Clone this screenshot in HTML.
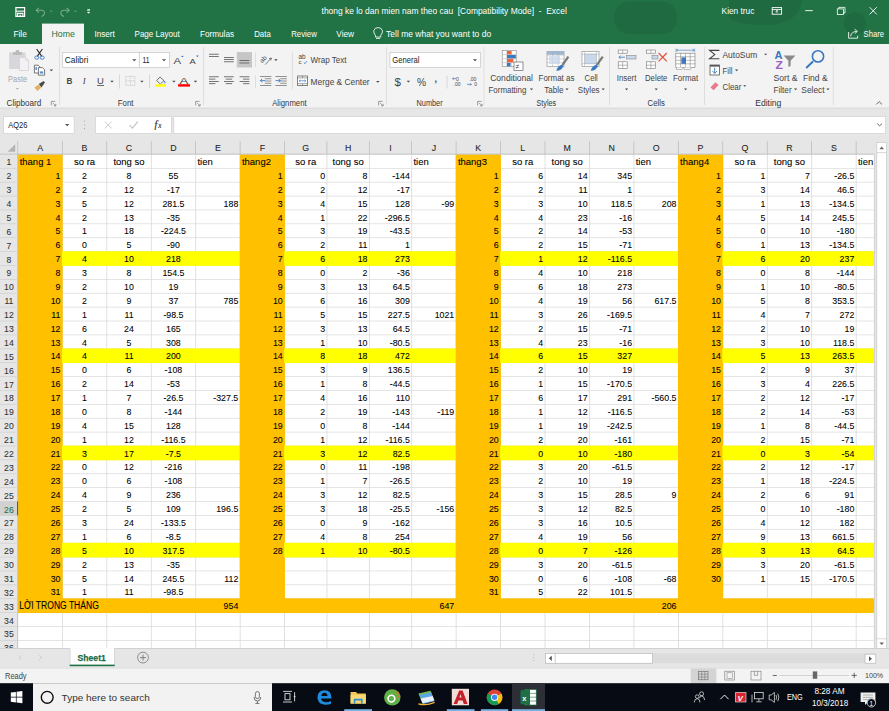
<!DOCTYPE html>
<html><head><meta charset="utf-8"><style>
html,body{margin:0;padding:0;width:889px;height:711px;overflow:hidden;background:#e6e6e6}
svg{display:block}
</style></head><body>
<svg width="889" height="711" viewBox="0 0 889 711">
<rect x="0" y="0" width="889" height="711" fill="#e6e6e6"/>
<!-- clip grid -->
<defs><clipPath id="gc"><rect x="0" y="0" width="874.2" height="648.4"/></clipPath></defs>
<g clip-path="url(#gc)"><rect x="17.86" y="154.4" width="856.34" height="494.0" fill="#fff"/><rect x="61.96" y="154.4" width="0.8" height="494.0" fill="#d9d9d9"/><rect x="106.40" y="154.4" width="0.8" height="494.0" fill="#d9d9d9"/><rect x="150.85" y="154.4" width="0.8" height="494.0" fill="#d9d9d9"/><rect x="195.30" y="154.4" width="0.8" height="494.0" fill="#d9d9d9"/><rect x="239.75" y="154.4" width="0.8" height="494.0" fill="#d9d9d9"/><rect x="284.19" y="154.4" width="0.8" height="494.0" fill="#d9d9d9"/><rect x="326.56" y="154.4" width="0.8" height="494.0" fill="#d9d9d9"/><rect x="368.92" y="154.4" width="0.8" height="494.0" fill="#d9d9d9"/><rect x="411.29" y="154.4" width="0.8" height="494.0" fill="#d9d9d9"/><rect x="455.73" y="154.4" width="0.8" height="494.0" fill="#d9d9d9"/><rect x="500.18" y="154.4" width="0.8" height="494.0" fill="#d9d9d9"/><rect x="544.63" y="154.4" width="0.8" height="494.0" fill="#d9d9d9"/><rect x="589.08" y="154.4" width="0.8" height="494.0" fill="#d9d9d9"/><rect x="633.52" y="154.4" width="0.8" height="494.0" fill="#d9d9d9"/><rect x="677.97" y="154.4" width="0.8" height="494.0" fill="#d9d9d9"/><rect x="722.42" y="154.4" width="0.8" height="494.0" fill="#d9d9d9"/><rect x="766.86" y="154.4" width="0.8" height="494.0" fill="#d9d9d9"/><rect x="811.31" y="154.4" width="0.8" height="494.0" fill="#d9d9d9"/><rect x="855.76" y="154.4" width="0.8" height="494.0" fill="#d9d9d9"/><rect x="17.86" y="167.94" width="856.34" height="0.7" fill="#d9d9d9"/><rect x="17.86" y="181.82" width="856.34" height="0.7" fill="#d9d9d9"/><rect x="17.86" y="195.71" width="856.34" height="0.7" fill="#d9d9d9"/><rect x="17.86" y="209.59" width="856.34" height="0.7" fill="#d9d9d9"/><rect x="17.86" y="223.47" width="856.34" height="0.7" fill="#d9d9d9"/><rect x="17.86" y="237.36" width="856.34" height="0.7" fill="#d9d9d9"/><rect x="17.86" y="251.25" width="856.34" height="0.7" fill="#d9d9d9"/><rect x="17.86" y="265.13" width="856.34" height="0.7" fill="#d9d9d9"/><rect x="17.86" y="279.01" width="856.34" height="0.7" fill="#d9d9d9"/><rect x="17.86" y="292.90" width="856.34" height="0.7" fill="#d9d9d9"/><rect x="17.86" y="306.78" width="856.34" height="0.7" fill="#d9d9d9"/><rect x="17.86" y="320.67" width="856.34" height="0.7" fill="#d9d9d9"/><rect x="17.86" y="334.55" width="856.34" height="0.7" fill="#d9d9d9"/><rect x="17.86" y="348.44" width="856.34" height="0.7" fill="#d9d9d9"/><rect x="17.86" y="362.32" width="856.34" height="0.7" fill="#d9d9d9"/><rect x="17.86" y="376.21" width="856.34" height="0.7" fill="#d9d9d9"/><rect x="17.86" y="390.09" width="856.34" height="0.7" fill="#d9d9d9"/><rect x="17.86" y="403.98" width="856.34" height="0.7" fill="#d9d9d9"/><rect x="17.86" y="417.87" width="856.34" height="0.7" fill="#d9d9d9"/><rect x="17.86" y="431.75" width="856.34" height="0.7" fill="#d9d9d9"/><rect x="17.86" y="445.63" width="856.34" height="0.7" fill="#d9d9d9"/><rect x="17.86" y="459.52" width="856.34" height="0.7" fill="#d9d9d9"/><rect x="17.86" y="473.40" width="856.34" height="0.7" fill="#d9d9d9"/><rect x="17.86" y="487.29" width="856.34" height="0.7" fill="#d9d9d9"/><rect x="17.86" y="501.17" width="856.34" height="0.7" fill="#d9d9d9"/><rect x="17.86" y="515.06" width="856.34" height="0.7" fill="#d9d9d9"/><rect x="17.86" y="528.94" width="856.34" height="0.7" fill="#d9d9d9"/><rect x="17.86" y="542.83" width="856.34" height="0.7" fill="#d9d9d9"/><rect x="17.86" y="556.72" width="856.34" height="0.7" fill="#d9d9d9"/><rect x="17.86" y="570.60" width="856.34" height="0.7" fill="#d9d9d9"/><rect x="17.86" y="584.49" width="856.34" height="0.7" fill="#d9d9d9"/><rect x="17.86" y="598.37" width="856.34" height="0.7" fill="#d9d9d9"/><rect x="17.86" y="612.25" width="856.34" height="0.7" fill="#d9d9d9"/><rect x="17.86" y="626.14" width="856.34" height="0.7" fill="#d9d9d9"/><rect x="17.86" y="640.02" width="856.34" height="0.7" fill="#d9d9d9"/><rect x="17.46" y="154.00" width="45.25" height="445.12" fill="#ffc000"/><rect x="61.91" y="251.19" width="178.59" height="14.69" fill="#ffff00"/><rect x="61.91" y="348.39" width="178.59" height="14.69" fill="#ffff00"/><rect x="61.91" y="445.59" width="178.59" height="14.69" fill="#ffff00"/><rect x="61.91" y="542.78" width="178.59" height="14.69" fill="#ffff00"/><rect x="239.70" y="154.00" width="45.25" height="445.12" fill="#ffc000"/><rect x="284.14" y="251.19" width="172.34" height="14.69" fill="#ffff00"/><rect x="284.14" y="348.39" width="172.34" height="14.69" fill="#ffff00"/><rect x="284.14" y="445.59" width="172.34" height="14.69" fill="#ffff00"/><rect x="284.14" y="542.78" width="172.34" height="14.69" fill="#ffff00"/><rect x="455.68" y="154.00" width="45.25" height="445.12" fill="#ffc000"/><rect x="500.13" y="251.19" width="178.59" height="14.69" fill="#ffff00"/><rect x="500.13" y="348.39" width="178.59" height="14.69" fill="#ffff00"/><rect x="500.13" y="445.59" width="178.59" height="14.69" fill="#ffff00"/><rect x="500.13" y="542.78" width="178.59" height="14.69" fill="#ffff00"/><rect x="677.92" y="154.00" width="45.25" height="445.12" fill="#ffc000"/><rect x="722.37" y="251.19" width="151.83" height="14.69" fill="#ffff00"/><rect x="722.37" y="348.39" width="151.83" height="14.69" fill="#ffff00"/><rect x="722.37" y="445.59" width="151.83" height="14.69" fill="#ffff00"/><rect x="722.37" y="542.78" width="151.83" height="14.69" fill="#ffff00"/><rect x="17.46" y="598.32" width="856.74" height="14.69" fill="#ffc000"/><g font-family="Liberation Sans" font-size="9.2" fill="#000" stroke="#000" stroke-width="0.08"><text x="19.66" y="165.00" text-anchor="start" font-size="9.5">thang 1</text><text x="84.53" y="165.00" text-anchor="middle" font-size="9.5">so ra</text><text x="128.98" y="165.00" text-anchor="middle" font-size="9.5">tong so</text><text x="197.45" y="165.00" text-anchor="start" font-size="9.5">tien</text><text x="60.51" y="178.88" text-anchor="end" font-size="9.75" textLength="4.91" lengthAdjust="spacingAndGlyphs">1</text><text x="84.53" y="178.88" text-anchor="middle" font-size="9.75" textLength="4.91" lengthAdjust="spacingAndGlyphs">2</text><text x="128.98" y="178.88" text-anchor="middle" font-size="9.75" textLength="4.91" lengthAdjust="spacingAndGlyphs">8</text><text x="173.43" y="178.88" text-anchor="middle" font-size="9.75" textLength="9.81" lengthAdjust="spacingAndGlyphs">55</text><text x="60.51" y="192.77" text-anchor="end" font-size="9.75" textLength="4.91" lengthAdjust="spacingAndGlyphs">2</text><text x="84.53" y="192.77" text-anchor="middle" font-size="9.75" textLength="4.91" lengthAdjust="spacingAndGlyphs">2</text><text x="128.98" y="192.77" text-anchor="middle" font-size="9.75" textLength="9.81" lengthAdjust="spacingAndGlyphs">12</text><text x="173.43" y="192.77" text-anchor="middle" font-size="9.75" textLength="12.75" lengthAdjust="spacingAndGlyphs">-17</text><text x="60.51" y="206.66" text-anchor="end" font-size="9.75" textLength="4.91" lengthAdjust="spacingAndGlyphs">3</text><text x="84.53" y="206.66" text-anchor="middle" font-size="9.75" textLength="4.91" lengthAdjust="spacingAndGlyphs">5</text><text x="128.98" y="206.66" text-anchor="middle" font-size="9.75" textLength="9.81" lengthAdjust="spacingAndGlyphs">12</text><text x="173.43" y="206.66" text-anchor="middle" font-size="9.75" textLength="22.08" lengthAdjust="spacingAndGlyphs">281.5</text><text x="238.30" y="206.66" text-anchor="end" font-size="9.75" textLength="14.72" lengthAdjust="spacingAndGlyphs">188</text><text x="60.51" y="220.54" text-anchor="end" font-size="9.75" textLength="4.91" lengthAdjust="spacingAndGlyphs">4</text><text x="84.53" y="220.54" text-anchor="middle" font-size="9.75" textLength="4.91" lengthAdjust="spacingAndGlyphs">2</text><text x="128.98" y="220.54" text-anchor="middle" font-size="9.75" textLength="9.81" lengthAdjust="spacingAndGlyphs">13</text><text x="173.43" y="220.54" text-anchor="middle" font-size="9.75" textLength="12.75" lengthAdjust="spacingAndGlyphs">-35</text><text x="60.51" y="234.42" text-anchor="end" font-size="9.75" textLength="4.91" lengthAdjust="spacingAndGlyphs">5</text><text x="84.53" y="234.42" text-anchor="middle" font-size="9.75" textLength="4.91" lengthAdjust="spacingAndGlyphs">1</text><text x="128.98" y="234.42" text-anchor="middle" font-size="9.75" textLength="9.81" lengthAdjust="spacingAndGlyphs">18</text><text x="173.43" y="234.42" text-anchor="middle" font-size="9.75" textLength="25.02" lengthAdjust="spacingAndGlyphs">-224.5</text><text x="60.51" y="248.31" text-anchor="end" font-size="9.75" textLength="4.91" lengthAdjust="spacingAndGlyphs">6</text><text x="84.53" y="248.31" text-anchor="middle" font-size="9.75" textLength="4.91" lengthAdjust="spacingAndGlyphs">0</text><text x="128.98" y="248.31" text-anchor="middle" font-size="9.75" textLength="4.91" lengthAdjust="spacingAndGlyphs">5</text><text x="173.43" y="248.31" text-anchor="middle" font-size="9.75" textLength="12.75" lengthAdjust="spacingAndGlyphs">-90</text><text x="60.51" y="262.19" text-anchor="end" font-size="9.75" textLength="4.91" lengthAdjust="spacingAndGlyphs">7</text><text x="84.53" y="262.19" text-anchor="middle" font-size="9.75" textLength="4.91" lengthAdjust="spacingAndGlyphs">4</text><text x="128.98" y="262.19" text-anchor="middle" font-size="9.75" textLength="9.81" lengthAdjust="spacingAndGlyphs">10</text><text x="173.43" y="262.19" text-anchor="middle" font-size="9.75" textLength="14.72" lengthAdjust="spacingAndGlyphs">218</text><text x="60.51" y="276.08" text-anchor="end" font-size="9.75" textLength="4.91" lengthAdjust="spacingAndGlyphs">8</text><text x="84.53" y="276.08" text-anchor="middle" font-size="9.75" textLength="4.91" lengthAdjust="spacingAndGlyphs">3</text><text x="128.98" y="276.08" text-anchor="middle" font-size="9.75" textLength="4.91" lengthAdjust="spacingAndGlyphs">8</text><text x="173.43" y="276.08" text-anchor="middle" font-size="9.75" textLength="22.08" lengthAdjust="spacingAndGlyphs">154.5</text><text x="60.51" y="289.97" text-anchor="end" font-size="9.75" textLength="4.91" lengthAdjust="spacingAndGlyphs">9</text><text x="84.53" y="289.97" text-anchor="middle" font-size="9.75" textLength="4.91" lengthAdjust="spacingAndGlyphs">2</text><text x="128.98" y="289.97" text-anchor="middle" font-size="9.75" textLength="9.81" lengthAdjust="spacingAndGlyphs">10</text><text x="173.43" y="289.97" text-anchor="middle" font-size="9.75" textLength="9.81" lengthAdjust="spacingAndGlyphs">19</text><text x="60.51" y="303.85" text-anchor="end" font-size="9.75" textLength="9.81" lengthAdjust="spacingAndGlyphs">10</text><text x="84.53" y="303.85" text-anchor="middle" font-size="9.75" textLength="4.91" lengthAdjust="spacingAndGlyphs">2</text><text x="128.98" y="303.85" text-anchor="middle" font-size="9.75" textLength="4.91" lengthAdjust="spacingAndGlyphs">9</text><text x="173.43" y="303.85" text-anchor="middle" font-size="9.75" textLength="9.81" lengthAdjust="spacingAndGlyphs">37</text><text x="238.30" y="303.85" text-anchor="end" font-size="9.75" textLength="14.72" lengthAdjust="spacingAndGlyphs">785</text><text x="60.51" y="317.74" text-anchor="end" font-size="9.75" textLength="9.16" lengthAdjust="spacingAndGlyphs">11</text><text x="84.53" y="317.74" text-anchor="middle" font-size="9.75" textLength="4.91" lengthAdjust="spacingAndGlyphs">1</text><text x="128.98" y="317.74" text-anchor="middle" font-size="9.75" textLength="9.16" lengthAdjust="spacingAndGlyphs">11</text><text x="173.43" y="317.74" text-anchor="middle" font-size="9.75" textLength="20.11" lengthAdjust="spacingAndGlyphs">-98.5</text><text x="60.51" y="331.62" text-anchor="end" font-size="9.75" textLength="9.81" lengthAdjust="spacingAndGlyphs">12</text><text x="84.53" y="331.62" text-anchor="middle" font-size="9.75" textLength="4.91" lengthAdjust="spacingAndGlyphs">6</text><text x="128.98" y="331.62" text-anchor="middle" font-size="9.75" textLength="9.81" lengthAdjust="spacingAndGlyphs">24</text><text x="173.43" y="331.62" text-anchor="middle" font-size="9.75" textLength="14.72" lengthAdjust="spacingAndGlyphs">165</text><text x="60.51" y="345.50" text-anchor="end" font-size="9.75" textLength="9.81" lengthAdjust="spacingAndGlyphs">13</text><text x="84.53" y="345.50" text-anchor="middle" font-size="9.75" textLength="4.91" lengthAdjust="spacingAndGlyphs">4</text><text x="128.98" y="345.50" text-anchor="middle" font-size="9.75" textLength="4.91" lengthAdjust="spacingAndGlyphs">5</text><text x="173.43" y="345.50" text-anchor="middle" font-size="9.75" textLength="14.72" lengthAdjust="spacingAndGlyphs">308</text><text x="60.51" y="359.39" text-anchor="end" font-size="9.75" textLength="9.81" lengthAdjust="spacingAndGlyphs">14</text><text x="84.53" y="359.39" text-anchor="middle" font-size="9.75" textLength="4.91" lengthAdjust="spacingAndGlyphs">4</text><text x="128.98" y="359.39" text-anchor="middle" font-size="9.75" textLength="9.16" lengthAdjust="spacingAndGlyphs">11</text><text x="173.43" y="359.39" text-anchor="middle" font-size="9.75" textLength="14.72" lengthAdjust="spacingAndGlyphs">200</text><text x="60.51" y="373.28" text-anchor="end" font-size="9.75" textLength="9.81" lengthAdjust="spacingAndGlyphs">15</text><text x="84.53" y="373.28" text-anchor="middle" font-size="9.75" textLength="4.91" lengthAdjust="spacingAndGlyphs">0</text><text x="128.98" y="373.28" text-anchor="middle" font-size="9.75" textLength="4.91" lengthAdjust="spacingAndGlyphs">6</text><text x="173.43" y="373.28" text-anchor="middle" font-size="9.75" textLength="17.66" lengthAdjust="spacingAndGlyphs">-108</text><text x="60.51" y="387.16" text-anchor="end" font-size="9.75" textLength="9.81" lengthAdjust="spacingAndGlyphs">16</text><text x="84.53" y="387.16" text-anchor="middle" font-size="9.75" textLength="4.91" lengthAdjust="spacingAndGlyphs">2</text><text x="128.98" y="387.16" text-anchor="middle" font-size="9.75" textLength="9.81" lengthAdjust="spacingAndGlyphs">14</text><text x="173.43" y="387.16" text-anchor="middle" font-size="9.75" textLength="12.75" lengthAdjust="spacingAndGlyphs">-53</text><text x="60.51" y="401.05" text-anchor="end" font-size="9.75" textLength="9.81" lengthAdjust="spacingAndGlyphs">17</text><text x="84.53" y="401.05" text-anchor="middle" font-size="9.75" textLength="4.91" lengthAdjust="spacingAndGlyphs">1</text><text x="128.98" y="401.05" text-anchor="middle" font-size="9.75" textLength="4.91" lengthAdjust="spacingAndGlyphs">7</text><text x="173.43" y="401.05" text-anchor="middle" font-size="9.75" textLength="20.11" lengthAdjust="spacingAndGlyphs">-26.5</text><text x="238.30" y="401.05" text-anchor="end" font-size="9.75" textLength="25.02" lengthAdjust="spacingAndGlyphs">-327.5</text><text x="60.51" y="414.93" text-anchor="end" font-size="9.75" textLength="9.81" lengthAdjust="spacingAndGlyphs">18</text><text x="84.53" y="414.93" text-anchor="middle" font-size="9.75" textLength="4.91" lengthAdjust="spacingAndGlyphs">0</text><text x="128.98" y="414.93" text-anchor="middle" font-size="9.75" textLength="4.91" lengthAdjust="spacingAndGlyphs">8</text><text x="173.43" y="414.93" text-anchor="middle" font-size="9.75" textLength="17.66" lengthAdjust="spacingAndGlyphs">-144</text><text x="60.51" y="428.82" text-anchor="end" font-size="9.75" textLength="9.81" lengthAdjust="spacingAndGlyphs">19</text><text x="84.53" y="428.82" text-anchor="middle" font-size="9.75" textLength="4.91" lengthAdjust="spacingAndGlyphs">4</text><text x="128.98" y="428.82" text-anchor="middle" font-size="9.75" textLength="9.81" lengthAdjust="spacingAndGlyphs">15</text><text x="173.43" y="428.82" text-anchor="middle" font-size="9.75" textLength="14.72" lengthAdjust="spacingAndGlyphs">128</text><text x="60.51" y="442.70" text-anchor="end" font-size="9.75" textLength="9.81" lengthAdjust="spacingAndGlyphs">20</text><text x="84.53" y="442.70" text-anchor="middle" font-size="9.75" textLength="4.91" lengthAdjust="spacingAndGlyphs">1</text><text x="128.98" y="442.70" text-anchor="middle" font-size="9.75" textLength="9.81" lengthAdjust="spacingAndGlyphs">12</text><text x="173.43" y="442.70" text-anchor="middle" font-size="9.75" textLength="24.36" lengthAdjust="spacingAndGlyphs">-116.5</text><text x="60.51" y="456.59" text-anchor="end" font-size="9.75" textLength="9.81" lengthAdjust="spacingAndGlyphs">21</text><text x="84.53" y="456.59" text-anchor="middle" font-size="9.75" textLength="4.91" lengthAdjust="spacingAndGlyphs">3</text><text x="128.98" y="456.59" text-anchor="middle" font-size="9.75" textLength="9.81" lengthAdjust="spacingAndGlyphs">17</text><text x="173.43" y="456.59" text-anchor="middle" font-size="9.75" textLength="15.20" lengthAdjust="spacingAndGlyphs">-7.5</text><text x="60.51" y="470.47" text-anchor="end" font-size="9.75" textLength="9.81" lengthAdjust="spacingAndGlyphs">22</text><text x="84.53" y="470.47" text-anchor="middle" font-size="9.75" textLength="4.91" lengthAdjust="spacingAndGlyphs">0</text><text x="128.98" y="470.47" text-anchor="middle" font-size="9.75" textLength="9.81" lengthAdjust="spacingAndGlyphs">12</text><text x="173.43" y="470.47" text-anchor="middle" font-size="9.75" textLength="17.66" lengthAdjust="spacingAndGlyphs">-216</text><text x="60.51" y="484.36" text-anchor="end" font-size="9.75" textLength="9.81" lengthAdjust="spacingAndGlyphs">23</text><text x="84.53" y="484.36" text-anchor="middle" font-size="9.75" textLength="4.91" lengthAdjust="spacingAndGlyphs">0</text><text x="128.98" y="484.36" text-anchor="middle" font-size="9.75" textLength="4.91" lengthAdjust="spacingAndGlyphs">6</text><text x="173.43" y="484.36" text-anchor="middle" font-size="9.75" textLength="17.66" lengthAdjust="spacingAndGlyphs">-108</text><text x="60.51" y="498.24" text-anchor="end" font-size="9.75" textLength="9.81" lengthAdjust="spacingAndGlyphs">24</text><text x="84.53" y="498.24" text-anchor="middle" font-size="9.75" textLength="4.91" lengthAdjust="spacingAndGlyphs">4</text><text x="128.98" y="498.24" text-anchor="middle" font-size="9.75" textLength="4.91" lengthAdjust="spacingAndGlyphs">9</text><text x="173.43" y="498.24" text-anchor="middle" font-size="9.75" textLength="14.72" lengthAdjust="spacingAndGlyphs">236</text><text x="60.51" y="512.12" text-anchor="end" font-size="9.75" textLength="9.81" lengthAdjust="spacingAndGlyphs">25</text><text x="84.53" y="512.12" text-anchor="middle" font-size="9.75" textLength="4.91" lengthAdjust="spacingAndGlyphs">2</text><text x="128.98" y="512.12" text-anchor="middle" font-size="9.75" textLength="4.91" lengthAdjust="spacingAndGlyphs">5</text><text x="173.43" y="512.12" text-anchor="middle" font-size="9.75" textLength="14.72" lengthAdjust="spacingAndGlyphs">109</text><text x="238.30" y="512.12" text-anchor="end" font-size="9.75" textLength="22.08" lengthAdjust="spacingAndGlyphs">196.5</text><text x="60.51" y="526.01" text-anchor="end" font-size="9.75" textLength="9.81" lengthAdjust="spacingAndGlyphs">26</text><text x="84.53" y="526.01" text-anchor="middle" font-size="9.75" textLength="4.91" lengthAdjust="spacingAndGlyphs">3</text><text x="128.98" y="526.01" text-anchor="middle" font-size="9.75" textLength="9.81" lengthAdjust="spacingAndGlyphs">24</text><text x="173.43" y="526.01" text-anchor="middle" font-size="9.75" textLength="25.02" lengthAdjust="spacingAndGlyphs">-133.5</text><text x="60.51" y="539.89" text-anchor="end" font-size="9.75" textLength="9.81" lengthAdjust="spacingAndGlyphs">27</text><text x="84.53" y="539.89" text-anchor="middle" font-size="9.75" textLength="4.91" lengthAdjust="spacingAndGlyphs">1</text><text x="128.98" y="539.89" text-anchor="middle" font-size="9.75" textLength="4.91" lengthAdjust="spacingAndGlyphs">6</text><text x="173.43" y="539.89" text-anchor="middle" font-size="9.75" textLength="15.20" lengthAdjust="spacingAndGlyphs">-8.5</text><text x="60.51" y="553.78" text-anchor="end" font-size="9.75" textLength="9.81" lengthAdjust="spacingAndGlyphs">28</text><text x="84.53" y="553.78" text-anchor="middle" font-size="9.75" textLength="4.91" lengthAdjust="spacingAndGlyphs">5</text><text x="128.98" y="553.78" text-anchor="middle" font-size="9.75" textLength="9.81" lengthAdjust="spacingAndGlyphs">10</text><text x="173.43" y="553.78" text-anchor="middle" font-size="9.75" textLength="22.08" lengthAdjust="spacingAndGlyphs">317.5</text><text x="60.51" y="567.67" text-anchor="end" font-size="9.75" textLength="9.81" lengthAdjust="spacingAndGlyphs">29</text><text x="84.53" y="567.67" text-anchor="middle" font-size="9.75" textLength="4.91" lengthAdjust="spacingAndGlyphs">2</text><text x="128.98" y="567.67" text-anchor="middle" font-size="9.75" textLength="9.81" lengthAdjust="spacingAndGlyphs">13</text><text x="173.43" y="567.67" text-anchor="middle" font-size="9.75" textLength="12.75" lengthAdjust="spacingAndGlyphs">-35</text><text x="60.51" y="581.55" text-anchor="end" font-size="9.75" textLength="9.81" lengthAdjust="spacingAndGlyphs">30</text><text x="84.53" y="581.55" text-anchor="middle" font-size="9.75" textLength="4.91" lengthAdjust="spacingAndGlyphs">5</text><text x="128.98" y="581.55" text-anchor="middle" font-size="9.75" textLength="9.81" lengthAdjust="spacingAndGlyphs">14</text><text x="173.43" y="581.55" text-anchor="middle" font-size="9.75" textLength="22.08" lengthAdjust="spacingAndGlyphs">245.5</text><text x="238.30" y="581.55" text-anchor="end" font-size="9.75" textLength="14.07" lengthAdjust="spacingAndGlyphs">112</text><text x="60.51" y="595.44" text-anchor="end" font-size="9.75" textLength="9.81" lengthAdjust="spacingAndGlyphs">31</text><text x="84.53" y="595.44" text-anchor="middle" font-size="9.75" textLength="4.91" lengthAdjust="spacingAndGlyphs">1</text><text x="128.98" y="595.44" text-anchor="middle" font-size="9.75" textLength="9.16" lengthAdjust="spacingAndGlyphs">11</text><text x="173.43" y="595.44" text-anchor="middle" font-size="9.75" textLength="20.11" lengthAdjust="spacingAndGlyphs">-98.5</text><text x="241.90" y="165.00" text-anchor="start" font-size="9.5">thang2</text><text x="305.73" y="165.00" text-anchor="middle" font-size="9.5">so ra</text><text x="348.09" y="165.00" text-anchor="middle" font-size="9.5">tong so</text><text x="413.44" y="165.00" text-anchor="start" font-size="9.5">tien</text><text x="282.74" y="178.88" text-anchor="end" font-size="9.75" textLength="4.91" lengthAdjust="spacingAndGlyphs">1</text><text x="325.11" y="178.88" text-anchor="end" font-size="9.75" textLength="4.91" lengthAdjust="spacingAndGlyphs">0</text><text x="367.47" y="178.88" text-anchor="end" font-size="9.75" textLength="4.91" lengthAdjust="spacingAndGlyphs">8</text><text x="409.84" y="178.88" text-anchor="end" font-size="9.75" textLength="17.66" lengthAdjust="spacingAndGlyphs">-144</text><text x="282.74" y="192.77" text-anchor="end" font-size="9.75" textLength="4.91" lengthAdjust="spacingAndGlyphs">2</text><text x="325.11" y="192.77" text-anchor="end" font-size="9.75" textLength="4.91" lengthAdjust="spacingAndGlyphs">2</text><text x="367.47" y="192.77" text-anchor="end" font-size="9.75" textLength="9.81" lengthAdjust="spacingAndGlyphs">12</text><text x="409.84" y="192.77" text-anchor="end" font-size="9.75" textLength="12.75" lengthAdjust="spacingAndGlyphs">-17</text><text x="282.74" y="206.66" text-anchor="end" font-size="9.75" textLength="4.91" lengthAdjust="spacingAndGlyphs">3</text><text x="325.11" y="206.66" text-anchor="end" font-size="9.75" textLength="4.91" lengthAdjust="spacingAndGlyphs">4</text><text x="367.47" y="206.66" text-anchor="end" font-size="9.75" textLength="9.81" lengthAdjust="spacingAndGlyphs">15</text><text x="409.84" y="206.66" text-anchor="end" font-size="9.75" textLength="14.72" lengthAdjust="spacingAndGlyphs">128</text><text x="454.28" y="206.66" text-anchor="end" font-size="9.75" textLength="12.75" lengthAdjust="spacingAndGlyphs">-99</text><text x="282.74" y="220.54" text-anchor="end" font-size="9.75" textLength="4.91" lengthAdjust="spacingAndGlyphs">4</text><text x="325.11" y="220.54" text-anchor="end" font-size="9.75" textLength="4.91" lengthAdjust="spacingAndGlyphs">1</text><text x="367.47" y="220.54" text-anchor="end" font-size="9.75" textLength="9.81" lengthAdjust="spacingAndGlyphs">22</text><text x="409.84" y="220.54" text-anchor="end" font-size="9.75" textLength="25.02" lengthAdjust="spacingAndGlyphs">-296.5</text><text x="282.74" y="234.42" text-anchor="end" font-size="9.75" textLength="4.91" lengthAdjust="spacingAndGlyphs">5</text><text x="325.11" y="234.42" text-anchor="end" font-size="9.75" textLength="4.91" lengthAdjust="spacingAndGlyphs">3</text><text x="367.47" y="234.42" text-anchor="end" font-size="9.75" textLength="9.81" lengthAdjust="spacingAndGlyphs">19</text><text x="409.84" y="234.42" text-anchor="end" font-size="9.75" textLength="20.11" lengthAdjust="spacingAndGlyphs">-43.5</text><text x="282.74" y="248.31" text-anchor="end" font-size="9.75" textLength="4.91" lengthAdjust="spacingAndGlyphs">6</text><text x="325.11" y="248.31" text-anchor="end" font-size="9.75" textLength="4.91" lengthAdjust="spacingAndGlyphs">2</text><text x="367.47" y="248.31" text-anchor="end" font-size="9.75" textLength="9.16" lengthAdjust="spacingAndGlyphs">11</text><text x="409.84" y="248.31" text-anchor="end" font-size="9.75" textLength="4.91" lengthAdjust="spacingAndGlyphs">1</text><text x="282.74" y="262.19" text-anchor="end" font-size="9.75" textLength="4.91" lengthAdjust="spacingAndGlyphs">7</text><text x="325.11" y="262.19" text-anchor="end" font-size="9.75" textLength="4.91" lengthAdjust="spacingAndGlyphs">6</text><text x="367.47" y="262.19" text-anchor="end" font-size="9.75" textLength="9.81" lengthAdjust="spacingAndGlyphs">18</text><text x="409.84" y="262.19" text-anchor="end" font-size="9.75" textLength="14.72" lengthAdjust="spacingAndGlyphs">273</text><text x="282.74" y="276.08" text-anchor="end" font-size="9.75" textLength="4.91" lengthAdjust="spacingAndGlyphs">8</text><text x="325.11" y="276.08" text-anchor="end" font-size="9.75" textLength="4.91" lengthAdjust="spacingAndGlyphs">0</text><text x="367.47" y="276.08" text-anchor="end" font-size="9.75" textLength="4.91" lengthAdjust="spacingAndGlyphs">2</text><text x="409.84" y="276.08" text-anchor="end" font-size="9.75" textLength="12.75" lengthAdjust="spacingAndGlyphs">-36</text><text x="282.74" y="289.97" text-anchor="end" font-size="9.75" textLength="4.91" lengthAdjust="spacingAndGlyphs">9</text><text x="325.11" y="289.97" text-anchor="end" font-size="9.75" textLength="4.91" lengthAdjust="spacingAndGlyphs">3</text><text x="367.47" y="289.97" text-anchor="end" font-size="9.75" textLength="9.81" lengthAdjust="spacingAndGlyphs">13</text><text x="409.84" y="289.97" text-anchor="end" font-size="9.75" textLength="17.17" lengthAdjust="spacingAndGlyphs">64.5</text><text x="282.74" y="303.85" text-anchor="end" font-size="9.75" textLength="9.81" lengthAdjust="spacingAndGlyphs">10</text><text x="325.11" y="303.85" text-anchor="end" font-size="9.75" textLength="4.91" lengthAdjust="spacingAndGlyphs">6</text><text x="367.47" y="303.85" text-anchor="end" font-size="9.75" textLength="9.81" lengthAdjust="spacingAndGlyphs">16</text><text x="409.84" y="303.85" text-anchor="end" font-size="9.75" textLength="14.72" lengthAdjust="spacingAndGlyphs">309</text><text x="282.74" y="317.74" text-anchor="end" font-size="9.75" textLength="9.16" lengthAdjust="spacingAndGlyphs">11</text><text x="325.11" y="317.74" text-anchor="end" font-size="9.75" textLength="4.91" lengthAdjust="spacingAndGlyphs">5</text><text x="367.47" y="317.74" text-anchor="end" font-size="9.75" textLength="9.81" lengthAdjust="spacingAndGlyphs">15</text><text x="409.84" y="317.74" text-anchor="end" font-size="9.75" textLength="22.08" lengthAdjust="spacingAndGlyphs">227.5</text><text x="454.28" y="317.74" text-anchor="end" font-size="9.75" textLength="19.63" lengthAdjust="spacingAndGlyphs">1021</text><text x="282.74" y="331.62" text-anchor="end" font-size="9.75" textLength="9.81" lengthAdjust="spacingAndGlyphs">12</text><text x="325.11" y="331.62" text-anchor="end" font-size="9.75" textLength="4.91" lengthAdjust="spacingAndGlyphs">3</text><text x="367.47" y="331.62" text-anchor="end" font-size="9.75" textLength="9.81" lengthAdjust="spacingAndGlyphs">13</text><text x="409.84" y="331.62" text-anchor="end" font-size="9.75" textLength="17.17" lengthAdjust="spacingAndGlyphs">64.5</text><text x="282.74" y="345.50" text-anchor="end" font-size="9.75" textLength="9.81" lengthAdjust="spacingAndGlyphs">13</text><text x="325.11" y="345.50" text-anchor="end" font-size="9.75" textLength="4.91" lengthAdjust="spacingAndGlyphs">1</text><text x="367.47" y="345.50" text-anchor="end" font-size="9.75" textLength="9.81" lengthAdjust="spacingAndGlyphs">10</text><text x="409.84" y="345.50" text-anchor="end" font-size="9.75" textLength="20.11" lengthAdjust="spacingAndGlyphs">-80.5</text><text x="282.74" y="359.39" text-anchor="end" font-size="9.75" textLength="9.81" lengthAdjust="spacingAndGlyphs">14</text><text x="325.11" y="359.39" text-anchor="end" font-size="9.75" textLength="4.91" lengthAdjust="spacingAndGlyphs">8</text><text x="367.47" y="359.39" text-anchor="end" font-size="9.75" textLength="9.81" lengthAdjust="spacingAndGlyphs">18</text><text x="409.84" y="359.39" text-anchor="end" font-size="9.75" textLength="14.72" lengthAdjust="spacingAndGlyphs">472</text><text x="282.74" y="373.28" text-anchor="end" font-size="9.75" textLength="9.81" lengthAdjust="spacingAndGlyphs">15</text><text x="325.11" y="373.28" text-anchor="end" font-size="9.75" textLength="4.91" lengthAdjust="spacingAndGlyphs">3</text><text x="367.47" y="373.28" text-anchor="end" font-size="9.75" textLength="4.91" lengthAdjust="spacingAndGlyphs">9</text><text x="409.84" y="373.28" text-anchor="end" font-size="9.75" textLength="22.08" lengthAdjust="spacingAndGlyphs">136.5</text><text x="282.74" y="387.16" text-anchor="end" font-size="9.75" textLength="9.81" lengthAdjust="spacingAndGlyphs">16</text><text x="325.11" y="387.16" text-anchor="end" font-size="9.75" textLength="4.91" lengthAdjust="spacingAndGlyphs">1</text><text x="367.47" y="387.16" text-anchor="end" font-size="9.75" textLength="4.91" lengthAdjust="spacingAndGlyphs">8</text><text x="409.84" y="387.16" text-anchor="end" font-size="9.75" textLength="20.11" lengthAdjust="spacingAndGlyphs">-44.5</text><text x="282.74" y="401.05" text-anchor="end" font-size="9.75" textLength="9.81" lengthAdjust="spacingAndGlyphs">17</text><text x="325.11" y="401.05" text-anchor="end" font-size="9.75" textLength="4.91" lengthAdjust="spacingAndGlyphs">4</text><text x="367.47" y="401.05" text-anchor="end" font-size="9.75" textLength="9.81" lengthAdjust="spacingAndGlyphs">16</text><text x="409.84" y="401.05" text-anchor="end" font-size="9.75" textLength="14.07" lengthAdjust="spacingAndGlyphs">110</text><text x="282.74" y="414.93" text-anchor="end" font-size="9.75" textLength="9.81" lengthAdjust="spacingAndGlyphs">18</text><text x="325.11" y="414.93" text-anchor="end" font-size="9.75" textLength="4.91" lengthAdjust="spacingAndGlyphs">2</text><text x="367.47" y="414.93" text-anchor="end" font-size="9.75" textLength="9.81" lengthAdjust="spacingAndGlyphs">19</text><text x="409.84" y="414.93" text-anchor="end" font-size="9.75" textLength="17.66" lengthAdjust="spacingAndGlyphs">-143</text><text x="454.28" y="414.93" text-anchor="end" font-size="9.75" textLength="17.00" lengthAdjust="spacingAndGlyphs">-119</text><text x="282.74" y="428.82" text-anchor="end" font-size="9.75" textLength="9.81" lengthAdjust="spacingAndGlyphs">19</text><text x="325.11" y="428.82" text-anchor="end" font-size="9.75" textLength="4.91" lengthAdjust="spacingAndGlyphs">0</text><text x="367.47" y="428.82" text-anchor="end" font-size="9.75" textLength="4.91" lengthAdjust="spacingAndGlyphs">8</text><text x="409.84" y="428.82" text-anchor="end" font-size="9.75" textLength="17.66" lengthAdjust="spacingAndGlyphs">-144</text><text x="282.74" y="442.70" text-anchor="end" font-size="9.75" textLength="9.81" lengthAdjust="spacingAndGlyphs">20</text><text x="325.11" y="442.70" text-anchor="end" font-size="9.75" textLength="4.91" lengthAdjust="spacingAndGlyphs">1</text><text x="367.47" y="442.70" text-anchor="end" font-size="9.75" textLength="9.81" lengthAdjust="spacingAndGlyphs">12</text><text x="409.84" y="442.70" text-anchor="end" font-size="9.75" textLength="24.36" lengthAdjust="spacingAndGlyphs">-116.5</text><text x="282.74" y="456.59" text-anchor="end" font-size="9.75" textLength="9.81" lengthAdjust="spacingAndGlyphs">21</text><text x="325.11" y="456.59" text-anchor="end" font-size="9.75" textLength="4.91" lengthAdjust="spacingAndGlyphs">3</text><text x="367.47" y="456.59" text-anchor="end" font-size="9.75" textLength="9.81" lengthAdjust="spacingAndGlyphs">12</text><text x="409.84" y="456.59" text-anchor="end" font-size="9.75" textLength="17.17" lengthAdjust="spacingAndGlyphs">82.5</text><text x="282.74" y="470.47" text-anchor="end" font-size="9.75" textLength="9.81" lengthAdjust="spacingAndGlyphs">22</text><text x="325.11" y="470.47" text-anchor="end" font-size="9.75" textLength="4.91" lengthAdjust="spacingAndGlyphs">0</text><text x="367.47" y="470.47" text-anchor="end" font-size="9.75" textLength="9.16" lengthAdjust="spacingAndGlyphs">11</text><text x="409.84" y="470.47" text-anchor="end" font-size="9.75" textLength="17.66" lengthAdjust="spacingAndGlyphs">-198</text><text x="282.74" y="484.36" text-anchor="end" font-size="9.75" textLength="9.81" lengthAdjust="spacingAndGlyphs">23</text><text x="325.11" y="484.36" text-anchor="end" font-size="9.75" textLength="4.91" lengthAdjust="spacingAndGlyphs">1</text><text x="367.47" y="484.36" text-anchor="end" font-size="9.75" textLength="4.91" lengthAdjust="spacingAndGlyphs">7</text><text x="409.84" y="484.36" text-anchor="end" font-size="9.75" textLength="20.11" lengthAdjust="spacingAndGlyphs">-26.5</text><text x="282.74" y="498.24" text-anchor="end" font-size="9.75" textLength="9.81" lengthAdjust="spacingAndGlyphs">24</text><text x="325.11" y="498.24" text-anchor="end" font-size="9.75" textLength="4.91" lengthAdjust="spacingAndGlyphs">3</text><text x="367.47" y="498.24" text-anchor="end" font-size="9.75" textLength="9.81" lengthAdjust="spacingAndGlyphs">12</text><text x="409.84" y="498.24" text-anchor="end" font-size="9.75" textLength="17.17" lengthAdjust="spacingAndGlyphs">82.5</text><text x="282.74" y="512.12" text-anchor="end" font-size="9.75" textLength="9.81" lengthAdjust="spacingAndGlyphs">25</text><text x="325.11" y="512.12" text-anchor="end" font-size="9.75" textLength="4.91" lengthAdjust="spacingAndGlyphs">3</text><text x="367.47" y="512.12" text-anchor="end" font-size="9.75" textLength="9.81" lengthAdjust="spacingAndGlyphs">18</text><text x="409.84" y="512.12" text-anchor="end" font-size="9.75" textLength="20.11" lengthAdjust="spacingAndGlyphs">-25.5</text><text x="454.28" y="512.12" text-anchor="end" font-size="9.75" textLength="17.66" lengthAdjust="spacingAndGlyphs">-156</text><text x="282.74" y="526.01" text-anchor="end" font-size="9.75" textLength="9.81" lengthAdjust="spacingAndGlyphs">26</text><text x="325.11" y="526.01" text-anchor="end" font-size="9.75" textLength="4.91" lengthAdjust="spacingAndGlyphs">0</text><text x="367.47" y="526.01" text-anchor="end" font-size="9.75" textLength="4.91" lengthAdjust="spacingAndGlyphs">9</text><text x="409.84" y="526.01" text-anchor="end" font-size="9.75" textLength="17.66" lengthAdjust="spacingAndGlyphs">-162</text><text x="282.74" y="539.89" text-anchor="end" font-size="9.75" textLength="9.81" lengthAdjust="spacingAndGlyphs">27</text><text x="325.11" y="539.89" text-anchor="end" font-size="9.75" textLength="4.91" lengthAdjust="spacingAndGlyphs">4</text><text x="367.47" y="539.89" text-anchor="end" font-size="9.75" textLength="4.91" lengthAdjust="spacingAndGlyphs">8</text><text x="409.84" y="539.89" text-anchor="end" font-size="9.75" textLength="14.72" lengthAdjust="spacingAndGlyphs">254</text><text x="282.74" y="553.78" text-anchor="end" font-size="9.75" textLength="9.81" lengthAdjust="spacingAndGlyphs">28</text><text x="325.11" y="553.78" text-anchor="end" font-size="9.75" textLength="4.91" lengthAdjust="spacingAndGlyphs">1</text><text x="367.47" y="553.78" text-anchor="end" font-size="9.75" textLength="9.81" lengthAdjust="spacingAndGlyphs">10</text><text x="409.84" y="553.78" text-anchor="end" font-size="9.75" textLength="20.11" lengthAdjust="spacingAndGlyphs">-80.5</text><text x="457.88" y="165.00" text-anchor="start" font-size="9.5">thang3</text><text x="522.75" y="165.00" text-anchor="middle" font-size="9.5">so ra</text><text x="567.20" y="165.00" text-anchor="middle" font-size="9.5">tong so</text><text x="635.67" y="165.00" text-anchor="start" font-size="9.5">tien</text><text x="498.73" y="178.88" text-anchor="end" font-size="9.75" textLength="4.91" lengthAdjust="spacingAndGlyphs">1</text><text x="543.18" y="178.88" text-anchor="end" font-size="9.75" textLength="4.91" lengthAdjust="spacingAndGlyphs">6</text><text x="587.63" y="178.88" text-anchor="end" font-size="9.75" textLength="9.81" lengthAdjust="spacingAndGlyphs">14</text><text x="632.07" y="178.88" text-anchor="end" font-size="9.75" textLength="14.72" lengthAdjust="spacingAndGlyphs">345</text><text x="498.73" y="192.77" text-anchor="end" font-size="9.75" textLength="4.91" lengthAdjust="spacingAndGlyphs">2</text><text x="543.18" y="192.77" text-anchor="end" font-size="9.75" textLength="4.91" lengthAdjust="spacingAndGlyphs">2</text><text x="587.63" y="192.77" text-anchor="end" font-size="9.75" textLength="9.16" lengthAdjust="spacingAndGlyphs">11</text><text x="632.07" y="192.77" text-anchor="end" font-size="9.75" textLength="4.91" lengthAdjust="spacingAndGlyphs">1</text><text x="498.73" y="206.66" text-anchor="end" font-size="9.75" textLength="4.91" lengthAdjust="spacingAndGlyphs">3</text><text x="543.18" y="206.66" text-anchor="end" font-size="9.75" textLength="4.91" lengthAdjust="spacingAndGlyphs">3</text><text x="587.63" y="206.66" text-anchor="end" font-size="9.75" textLength="9.81" lengthAdjust="spacingAndGlyphs">10</text><text x="632.07" y="206.66" text-anchor="end" font-size="9.75" textLength="21.42" lengthAdjust="spacingAndGlyphs">118.5</text><text x="676.52" y="206.66" text-anchor="end" font-size="9.75" textLength="14.72" lengthAdjust="spacingAndGlyphs">208</text><text x="498.73" y="220.54" text-anchor="end" font-size="9.75" textLength="4.91" lengthAdjust="spacingAndGlyphs">4</text><text x="543.18" y="220.54" text-anchor="end" font-size="9.75" textLength="4.91" lengthAdjust="spacingAndGlyphs">4</text><text x="587.63" y="220.54" text-anchor="end" font-size="9.75" textLength="9.81" lengthAdjust="spacingAndGlyphs">23</text><text x="632.07" y="220.54" text-anchor="end" font-size="9.75" textLength="12.75" lengthAdjust="spacingAndGlyphs">-16</text><text x="498.73" y="234.42" text-anchor="end" font-size="9.75" textLength="4.91" lengthAdjust="spacingAndGlyphs">5</text><text x="543.18" y="234.42" text-anchor="end" font-size="9.75" textLength="4.91" lengthAdjust="spacingAndGlyphs">2</text><text x="587.63" y="234.42" text-anchor="end" font-size="9.75" textLength="9.81" lengthAdjust="spacingAndGlyphs">14</text><text x="632.07" y="234.42" text-anchor="end" font-size="9.75" textLength="12.75" lengthAdjust="spacingAndGlyphs">-53</text><text x="498.73" y="248.31" text-anchor="end" font-size="9.75" textLength="4.91" lengthAdjust="spacingAndGlyphs">6</text><text x="543.18" y="248.31" text-anchor="end" font-size="9.75" textLength="4.91" lengthAdjust="spacingAndGlyphs">2</text><text x="587.63" y="248.31" text-anchor="end" font-size="9.75" textLength="9.81" lengthAdjust="spacingAndGlyphs">15</text><text x="632.07" y="248.31" text-anchor="end" font-size="9.75" textLength="12.75" lengthAdjust="spacingAndGlyphs">-71</text><text x="498.73" y="262.19" text-anchor="end" font-size="9.75" textLength="4.91" lengthAdjust="spacingAndGlyphs">7</text><text x="543.18" y="262.19" text-anchor="end" font-size="9.75" textLength="4.91" lengthAdjust="spacingAndGlyphs">1</text><text x="587.63" y="262.19" text-anchor="end" font-size="9.75" textLength="9.81" lengthAdjust="spacingAndGlyphs">12</text><text x="632.07" y="262.19" text-anchor="end" font-size="9.75" textLength="24.36" lengthAdjust="spacingAndGlyphs">-116.5</text><text x="498.73" y="276.08" text-anchor="end" font-size="9.75" textLength="4.91" lengthAdjust="spacingAndGlyphs">8</text><text x="543.18" y="276.08" text-anchor="end" font-size="9.75" textLength="4.91" lengthAdjust="spacingAndGlyphs">4</text><text x="587.63" y="276.08" text-anchor="end" font-size="9.75" textLength="9.81" lengthAdjust="spacingAndGlyphs">10</text><text x="632.07" y="276.08" text-anchor="end" font-size="9.75" textLength="14.72" lengthAdjust="spacingAndGlyphs">218</text><text x="498.73" y="289.97" text-anchor="end" font-size="9.75" textLength="4.91" lengthAdjust="spacingAndGlyphs">9</text><text x="543.18" y="289.97" text-anchor="end" font-size="9.75" textLength="4.91" lengthAdjust="spacingAndGlyphs">6</text><text x="587.63" y="289.97" text-anchor="end" font-size="9.75" textLength="9.81" lengthAdjust="spacingAndGlyphs">18</text><text x="632.07" y="289.97" text-anchor="end" font-size="9.75" textLength="14.72" lengthAdjust="spacingAndGlyphs">273</text><text x="498.73" y="303.85" text-anchor="end" font-size="9.75" textLength="9.81" lengthAdjust="spacingAndGlyphs">10</text><text x="543.18" y="303.85" text-anchor="end" font-size="9.75" textLength="4.91" lengthAdjust="spacingAndGlyphs">4</text><text x="587.63" y="303.85" text-anchor="end" font-size="9.75" textLength="9.81" lengthAdjust="spacingAndGlyphs">19</text><text x="632.07" y="303.85" text-anchor="end" font-size="9.75" textLength="9.81" lengthAdjust="spacingAndGlyphs">56</text><text x="676.52" y="303.85" text-anchor="end" font-size="9.75" textLength="22.08" lengthAdjust="spacingAndGlyphs">617.5</text><text x="498.73" y="317.74" text-anchor="end" font-size="9.75" textLength="9.16" lengthAdjust="spacingAndGlyphs">11</text><text x="543.18" y="317.74" text-anchor="end" font-size="9.75" textLength="4.91" lengthAdjust="spacingAndGlyphs">3</text><text x="587.63" y="317.74" text-anchor="end" font-size="9.75" textLength="9.81" lengthAdjust="spacingAndGlyphs">26</text><text x="632.07" y="317.74" text-anchor="end" font-size="9.75" textLength="25.02" lengthAdjust="spacingAndGlyphs">-169.5</text><text x="498.73" y="331.62" text-anchor="end" font-size="9.75" textLength="9.81" lengthAdjust="spacingAndGlyphs">12</text><text x="543.18" y="331.62" text-anchor="end" font-size="9.75" textLength="4.91" lengthAdjust="spacingAndGlyphs">2</text><text x="587.63" y="331.62" text-anchor="end" font-size="9.75" textLength="9.81" lengthAdjust="spacingAndGlyphs">15</text><text x="632.07" y="331.62" text-anchor="end" font-size="9.75" textLength="12.75" lengthAdjust="spacingAndGlyphs">-71</text><text x="498.73" y="345.50" text-anchor="end" font-size="9.75" textLength="9.81" lengthAdjust="spacingAndGlyphs">13</text><text x="543.18" y="345.50" text-anchor="end" font-size="9.75" textLength="4.91" lengthAdjust="spacingAndGlyphs">4</text><text x="587.63" y="345.50" text-anchor="end" font-size="9.75" textLength="9.81" lengthAdjust="spacingAndGlyphs">23</text><text x="632.07" y="345.50" text-anchor="end" font-size="9.75" textLength="12.75" lengthAdjust="spacingAndGlyphs">-16</text><text x="498.73" y="359.39" text-anchor="end" font-size="9.75" textLength="9.81" lengthAdjust="spacingAndGlyphs">14</text><text x="543.18" y="359.39" text-anchor="end" font-size="9.75" textLength="4.91" lengthAdjust="spacingAndGlyphs">6</text><text x="587.63" y="359.39" text-anchor="end" font-size="9.75" textLength="9.81" lengthAdjust="spacingAndGlyphs">15</text><text x="632.07" y="359.39" text-anchor="end" font-size="9.75" textLength="14.72" lengthAdjust="spacingAndGlyphs">327</text><text x="498.73" y="373.28" text-anchor="end" font-size="9.75" textLength="9.81" lengthAdjust="spacingAndGlyphs">15</text><text x="543.18" y="373.28" text-anchor="end" font-size="9.75" textLength="4.91" lengthAdjust="spacingAndGlyphs">2</text><text x="587.63" y="373.28" text-anchor="end" font-size="9.75" textLength="9.81" lengthAdjust="spacingAndGlyphs">10</text><text x="632.07" y="373.28" text-anchor="end" font-size="9.75" textLength="9.81" lengthAdjust="spacingAndGlyphs">19</text><text x="498.73" y="387.16" text-anchor="end" font-size="9.75" textLength="9.81" lengthAdjust="spacingAndGlyphs">16</text><text x="543.18" y="387.16" text-anchor="end" font-size="9.75" textLength="4.91" lengthAdjust="spacingAndGlyphs">1</text><text x="587.63" y="387.16" text-anchor="end" font-size="9.75" textLength="9.81" lengthAdjust="spacingAndGlyphs">15</text><text x="632.07" y="387.16" text-anchor="end" font-size="9.75" textLength="25.02" lengthAdjust="spacingAndGlyphs">-170.5</text><text x="498.73" y="401.05" text-anchor="end" font-size="9.75" textLength="9.81" lengthAdjust="spacingAndGlyphs">17</text><text x="543.18" y="401.05" text-anchor="end" font-size="9.75" textLength="4.91" lengthAdjust="spacingAndGlyphs">6</text><text x="587.63" y="401.05" text-anchor="end" font-size="9.75" textLength="9.81" lengthAdjust="spacingAndGlyphs">17</text><text x="632.07" y="401.05" text-anchor="end" font-size="9.75" textLength="14.72" lengthAdjust="spacingAndGlyphs">291</text><text x="676.52" y="401.05" text-anchor="end" font-size="9.75" textLength="25.02" lengthAdjust="spacingAndGlyphs">-560.5</text><text x="498.73" y="414.93" text-anchor="end" font-size="9.75" textLength="9.81" lengthAdjust="spacingAndGlyphs">18</text><text x="543.18" y="414.93" text-anchor="end" font-size="9.75" textLength="4.91" lengthAdjust="spacingAndGlyphs">1</text><text x="587.63" y="414.93" text-anchor="end" font-size="9.75" textLength="9.81" lengthAdjust="spacingAndGlyphs">12</text><text x="632.07" y="414.93" text-anchor="end" font-size="9.75" textLength="24.36" lengthAdjust="spacingAndGlyphs">-116.5</text><text x="498.73" y="428.82" text-anchor="end" font-size="9.75" textLength="9.81" lengthAdjust="spacingAndGlyphs">19</text><text x="543.18" y="428.82" text-anchor="end" font-size="9.75" textLength="4.91" lengthAdjust="spacingAndGlyphs">1</text><text x="587.63" y="428.82" text-anchor="end" font-size="9.75" textLength="9.81" lengthAdjust="spacingAndGlyphs">19</text><text x="632.07" y="428.82" text-anchor="end" font-size="9.75" textLength="25.02" lengthAdjust="spacingAndGlyphs">-242.5</text><text x="498.73" y="442.70" text-anchor="end" font-size="9.75" textLength="9.81" lengthAdjust="spacingAndGlyphs">20</text><text x="543.18" y="442.70" text-anchor="end" font-size="9.75" textLength="4.91" lengthAdjust="spacingAndGlyphs">2</text><text x="587.63" y="442.70" text-anchor="end" font-size="9.75" textLength="9.81" lengthAdjust="spacingAndGlyphs">20</text><text x="632.07" y="442.70" text-anchor="end" font-size="9.75" textLength="17.66" lengthAdjust="spacingAndGlyphs">-161</text><text x="498.73" y="456.59" text-anchor="end" font-size="9.75" textLength="9.81" lengthAdjust="spacingAndGlyphs">21</text><text x="543.18" y="456.59" text-anchor="end" font-size="9.75" textLength="4.91" lengthAdjust="spacingAndGlyphs">0</text><text x="587.63" y="456.59" text-anchor="end" font-size="9.75" textLength="9.81" lengthAdjust="spacingAndGlyphs">10</text><text x="632.07" y="456.59" text-anchor="end" font-size="9.75" textLength="17.66" lengthAdjust="spacingAndGlyphs">-180</text><text x="498.73" y="470.47" text-anchor="end" font-size="9.75" textLength="9.81" lengthAdjust="spacingAndGlyphs">22</text><text x="543.18" y="470.47" text-anchor="end" font-size="9.75" textLength="4.91" lengthAdjust="spacingAndGlyphs">3</text><text x="587.63" y="470.47" text-anchor="end" font-size="9.75" textLength="9.81" lengthAdjust="spacingAndGlyphs">20</text><text x="632.07" y="470.47" text-anchor="end" font-size="9.75" textLength="20.11" lengthAdjust="spacingAndGlyphs">-61.5</text><text x="498.73" y="484.36" text-anchor="end" font-size="9.75" textLength="9.81" lengthAdjust="spacingAndGlyphs">23</text><text x="543.18" y="484.36" text-anchor="end" font-size="9.75" textLength="4.91" lengthAdjust="spacingAndGlyphs">2</text><text x="587.63" y="484.36" text-anchor="end" font-size="9.75" textLength="9.81" lengthAdjust="spacingAndGlyphs">10</text><text x="632.07" y="484.36" text-anchor="end" font-size="9.75" textLength="9.81" lengthAdjust="spacingAndGlyphs">19</text><text x="498.73" y="498.24" text-anchor="end" font-size="9.75" textLength="9.81" lengthAdjust="spacingAndGlyphs">24</text><text x="543.18" y="498.24" text-anchor="end" font-size="9.75" textLength="4.91" lengthAdjust="spacingAndGlyphs">3</text><text x="587.63" y="498.24" text-anchor="end" font-size="9.75" textLength="9.81" lengthAdjust="spacingAndGlyphs">15</text><text x="632.07" y="498.24" text-anchor="end" font-size="9.75" textLength="17.17" lengthAdjust="spacingAndGlyphs">28.5</text><text x="676.52" y="498.24" text-anchor="end" font-size="9.75" textLength="4.91" lengthAdjust="spacingAndGlyphs">9</text><text x="498.73" y="512.12" text-anchor="end" font-size="9.75" textLength="9.81" lengthAdjust="spacingAndGlyphs">25</text><text x="543.18" y="512.12" text-anchor="end" font-size="9.75" textLength="4.91" lengthAdjust="spacingAndGlyphs">3</text><text x="587.63" y="512.12" text-anchor="end" font-size="9.75" textLength="9.81" lengthAdjust="spacingAndGlyphs">12</text><text x="632.07" y="512.12" text-anchor="end" font-size="9.75" textLength="17.17" lengthAdjust="spacingAndGlyphs">82.5</text><text x="498.73" y="526.01" text-anchor="end" font-size="9.75" textLength="9.81" lengthAdjust="spacingAndGlyphs">26</text><text x="543.18" y="526.01" text-anchor="end" font-size="9.75" textLength="4.91" lengthAdjust="spacingAndGlyphs">3</text><text x="587.63" y="526.01" text-anchor="end" font-size="9.75" textLength="9.81" lengthAdjust="spacingAndGlyphs">16</text><text x="632.07" y="526.01" text-anchor="end" font-size="9.75" textLength="17.17" lengthAdjust="spacingAndGlyphs">10.5</text><text x="498.73" y="539.89" text-anchor="end" font-size="9.75" textLength="9.81" lengthAdjust="spacingAndGlyphs">27</text><text x="543.18" y="539.89" text-anchor="end" font-size="9.75" textLength="4.91" lengthAdjust="spacingAndGlyphs">4</text><text x="587.63" y="539.89" text-anchor="end" font-size="9.75" textLength="9.81" lengthAdjust="spacingAndGlyphs">19</text><text x="632.07" y="539.89" text-anchor="end" font-size="9.75" textLength="9.81" lengthAdjust="spacingAndGlyphs">56</text><text x="498.73" y="553.78" text-anchor="end" font-size="9.75" textLength="9.81" lengthAdjust="spacingAndGlyphs">28</text><text x="543.18" y="553.78" text-anchor="end" font-size="9.75" textLength="4.91" lengthAdjust="spacingAndGlyphs">0</text><text x="587.63" y="553.78" text-anchor="end" font-size="9.75" textLength="4.91" lengthAdjust="spacingAndGlyphs">7</text><text x="632.07" y="553.78" text-anchor="end" font-size="9.75" textLength="17.66" lengthAdjust="spacingAndGlyphs">-126</text><text x="498.73" y="567.67" text-anchor="end" font-size="9.75" textLength="9.81" lengthAdjust="spacingAndGlyphs">29</text><text x="543.18" y="567.67" text-anchor="end" font-size="9.75" textLength="4.91" lengthAdjust="spacingAndGlyphs">3</text><text x="587.63" y="567.67" text-anchor="end" font-size="9.75" textLength="9.81" lengthAdjust="spacingAndGlyphs">20</text><text x="632.07" y="567.67" text-anchor="end" font-size="9.75" textLength="20.11" lengthAdjust="spacingAndGlyphs">-61.5</text><text x="498.73" y="581.55" text-anchor="end" font-size="9.75" textLength="9.81" lengthAdjust="spacingAndGlyphs">30</text><text x="543.18" y="581.55" text-anchor="end" font-size="9.75" textLength="4.91" lengthAdjust="spacingAndGlyphs">0</text><text x="587.63" y="581.55" text-anchor="end" font-size="9.75" textLength="4.91" lengthAdjust="spacingAndGlyphs">6</text><text x="632.07" y="581.55" text-anchor="end" font-size="9.75" textLength="17.66" lengthAdjust="spacingAndGlyphs">-108</text><text x="676.52" y="581.55" text-anchor="end" font-size="9.75" textLength="12.75" lengthAdjust="spacingAndGlyphs">-68</text><text x="498.73" y="595.44" text-anchor="end" font-size="9.75" textLength="9.81" lengthAdjust="spacingAndGlyphs">31</text><text x="543.18" y="595.44" text-anchor="end" font-size="9.75" textLength="4.91" lengthAdjust="spacingAndGlyphs">5</text><text x="587.63" y="595.44" text-anchor="end" font-size="9.75" textLength="9.81" lengthAdjust="spacingAndGlyphs">22</text><text x="632.07" y="595.44" text-anchor="end" font-size="9.75" textLength="22.08" lengthAdjust="spacingAndGlyphs">101.5</text><text x="680.12" y="165.00" text-anchor="start" font-size="9.5">thang4</text><text x="744.99" y="165.00" text-anchor="middle" font-size="9.5">so ra</text><text x="789.44" y="165.00" text-anchor="middle" font-size="9.5">tong so</text><text x="857.91" y="165.00" text-anchor="start" font-size="9.5">tien</text><text x="720.97" y="178.88" text-anchor="end" font-size="9.75" textLength="4.91" lengthAdjust="spacingAndGlyphs">1</text><text x="765.41" y="178.88" text-anchor="end" font-size="9.75" textLength="4.91" lengthAdjust="spacingAndGlyphs">1</text><text x="809.86" y="178.88" text-anchor="end" font-size="9.75" textLength="4.91" lengthAdjust="spacingAndGlyphs">7</text><text x="854.31" y="178.88" text-anchor="end" font-size="9.75" textLength="20.11" lengthAdjust="spacingAndGlyphs">-26.5</text><text x="720.97" y="192.77" text-anchor="end" font-size="9.75" textLength="4.91" lengthAdjust="spacingAndGlyphs">2</text><text x="765.41" y="192.77" text-anchor="end" font-size="9.75" textLength="4.91" lengthAdjust="spacingAndGlyphs">3</text><text x="809.86" y="192.77" text-anchor="end" font-size="9.75" textLength="9.81" lengthAdjust="spacingAndGlyphs">14</text><text x="854.31" y="192.77" text-anchor="end" font-size="9.75" textLength="17.17" lengthAdjust="spacingAndGlyphs">46.5</text><text x="720.97" y="206.66" text-anchor="end" font-size="9.75" textLength="4.91" lengthAdjust="spacingAndGlyphs">3</text><text x="765.41" y="206.66" text-anchor="end" font-size="9.75" textLength="4.91" lengthAdjust="spacingAndGlyphs">1</text><text x="809.86" y="206.66" text-anchor="end" font-size="9.75" textLength="9.81" lengthAdjust="spacingAndGlyphs">13</text><text x="854.31" y="206.66" text-anchor="end" font-size="9.75" textLength="25.02" lengthAdjust="spacingAndGlyphs">-134.5</text><text x="720.97" y="220.54" text-anchor="end" font-size="9.75" textLength="4.91" lengthAdjust="spacingAndGlyphs">4</text><text x="765.41" y="220.54" text-anchor="end" font-size="9.75" textLength="4.91" lengthAdjust="spacingAndGlyphs">5</text><text x="809.86" y="220.54" text-anchor="end" font-size="9.75" textLength="9.81" lengthAdjust="spacingAndGlyphs">14</text><text x="854.31" y="220.54" text-anchor="end" font-size="9.75" textLength="22.08" lengthAdjust="spacingAndGlyphs">245.5</text><text x="720.97" y="234.42" text-anchor="end" font-size="9.75" textLength="4.91" lengthAdjust="spacingAndGlyphs">5</text><text x="765.41" y="234.42" text-anchor="end" font-size="9.75" textLength="4.91" lengthAdjust="spacingAndGlyphs">0</text><text x="809.86" y="234.42" text-anchor="end" font-size="9.75" textLength="9.81" lengthAdjust="spacingAndGlyphs">10</text><text x="854.31" y="234.42" text-anchor="end" font-size="9.75" textLength="17.66" lengthAdjust="spacingAndGlyphs">-180</text><text x="720.97" y="248.31" text-anchor="end" font-size="9.75" textLength="4.91" lengthAdjust="spacingAndGlyphs">6</text><text x="765.41" y="248.31" text-anchor="end" font-size="9.75" textLength="4.91" lengthAdjust="spacingAndGlyphs">1</text><text x="809.86" y="248.31" text-anchor="end" font-size="9.75" textLength="9.81" lengthAdjust="spacingAndGlyphs">13</text><text x="854.31" y="248.31" text-anchor="end" font-size="9.75" textLength="25.02" lengthAdjust="spacingAndGlyphs">-134.5</text><text x="720.97" y="262.19" text-anchor="end" font-size="9.75" textLength="4.91" lengthAdjust="spacingAndGlyphs">7</text><text x="765.41" y="262.19" text-anchor="end" font-size="9.75" textLength="4.91" lengthAdjust="spacingAndGlyphs">6</text><text x="809.86" y="262.19" text-anchor="end" font-size="9.75" textLength="9.81" lengthAdjust="spacingAndGlyphs">20</text><text x="854.31" y="262.19" text-anchor="end" font-size="9.75" textLength="14.72" lengthAdjust="spacingAndGlyphs">237</text><text x="720.97" y="276.08" text-anchor="end" font-size="9.75" textLength="4.91" lengthAdjust="spacingAndGlyphs">8</text><text x="765.41" y="276.08" text-anchor="end" font-size="9.75" textLength="4.91" lengthAdjust="spacingAndGlyphs">0</text><text x="809.86" y="276.08" text-anchor="end" font-size="9.75" textLength="4.91" lengthAdjust="spacingAndGlyphs">8</text><text x="854.31" y="276.08" text-anchor="end" font-size="9.75" textLength="17.66" lengthAdjust="spacingAndGlyphs">-144</text><text x="720.97" y="289.97" text-anchor="end" font-size="9.75" textLength="4.91" lengthAdjust="spacingAndGlyphs">9</text><text x="765.41" y="289.97" text-anchor="end" font-size="9.75" textLength="4.91" lengthAdjust="spacingAndGlyphs">1</text><text x="809.86" y="289.97" text-anchor="end" font-size="9.75" textLength="9.81" lengthAdjust="spacingAndGlyphs">10</text><text x="854.31" y="289.97" text-anchor="end" font-size="9.75" textLength="20.11" lengthAdjust="spacingAndGlyphs">-80.5</text><text x="720.97" y="303.85" text-anchor="end" font-size="9.75" textLength="9.81" lengthAdjust="spacingAndGlyphs">10</text><text x="765.41" y="303.85" text-anchor="end" font-size="9.75" textLength="4.91" lengthAdjust="spacingAndGlyphs">5</text><text x="809.86" y="303.85" text-anchor="end" font-size="9.75" textLength="4.91" lengthAdjust="spacingAndGlyphs">8</text><text x="854.31" y="303.85" text-anchor="end" font-size="9.75" textLength="22.08" lengthAdjust="spacingAndGlyphs">353.5</text><text x="720.97" y="317.74" text-anchor="end" font-size="9.75" textLength="9.16" lengthAdjust="spacingAndGlyphs">11</text><text x="765.41" y="317.74" text-anchor="end" font-size="9.75" textLength="4.91" lengthAdjust="spacingAndGlyphs">4</text><text x="809.86" y="317.74" text-anchor="end" font-size="9.75" textLength="4.91" lengthAdjust="spacingAndGlyphs">7</text><text x="854.31" y="317.74" text-anchor="end" font-size="9.75" textLength="14.72" lengthAdjust="spacingAndGlyphs">272</text><text x="720.97" y="331.62" text-anchor="end" font-size="9.75" textLength="9.81" lengthAdjust="spacingAndGlyphs">12</text><text x="765.41" y="331.62" text-anchor="end" font-size="9.75" textLength="4.91" lengthAdjust="spacingAndGlyphs">2</text><text x="809.86" y="331.62" text-anchor="end" font-size="9.75" textLength="9.81" lengthAdjust="spacingAndGlyphs">10</text><text x="854.31" y="331.62" text-anchor="end" font-size="9.75" textLength="9.81" lengthAdjust="spacingAndGlyphs">19</text><text x="720.97" y="345.50" text-anchor="end" font-size="9.75" textLength="9.81" lengthAdjust="spacingAndGlyphs">13</text><text x="765.41" y="345.50" text-anchor="end" font-size="9.75" textLength="4.91" lengthAdjust="spacingAndGlyphs">3</text><text x="809.86" y="345.50" text-anchor="end" font-size="9.75" textLength="9.81" lengthAdjust="spacingAndGlyphs">10</text><text x="854.31" y="345.50" text-anchor="end" font-size="9.75" textLength="21.42" lengthAdjust="spacingAndGlyphs">118.5</text><text x="720.97" y="359.39" text-anchor="end" font-size="9.75" textLength="9.81" lengthAdjust="spacingAndGlyphs">14</text><text x="765.41" y="359.39" text-anchor="end" font-size="9.75" textLength="4.91" lengthAdjust="spacingAndGlyphs">5</text><text x="809.86" y="359.39" text-anchor="end" font-size="9.75" textLength="9.81" lengthAdjust="spacingAndGlyphs">13</text><text x="854.31" y="359.39" text-anchor="end" font-size="9.75" textLength="22.08" lengthAdjust="spacingAndGlyphs">263.5</text><text x="720.97" y="373.28" text-anchor="end" font-size="9.75" textLength="9.81" lengthAdjust="spacingAndGlyphs">15</text><text x="765.41" y="373.28" text-anchor="end" font-size="9.75" textLength="4.91" lengthAdjust="spacingAndGlyphs">2</text><text x="809.86" y="373.28" text-anchor="end" font-size="9.75" textLength="4.91" lengthAdjust="spacingAndGlyphs">9</text><text x="854.31" y="373.28" text-anchor="end" font-size="9.75" textLength="9.81" lengthAdjust="spacingAndGlyphs">37</text><text x="720.97" y="387.16" text-anchor="end" font-size="9.75" textLength="9.81" lengthAdjust="spacingAndGlyphs">16</text><text x="765.41" y="387.16" text-anchor="end" font-size="9.75" textLength="4.91" lengthAdjust="spacingAndGlyphs">3</text><text x="809.86" y="387.16" text-anchor="end" font-size="9.75" textLength="4.91" lengthAdjust="spacingAndGlyphs">4</text><text x="854.31" y="387.16" text-anchor="end" font-size="9.75" textLength="22.08" lengthAdjust="spacingAndGlyphs">226.5</text><text x="720.97" y="401.05" text-anchor="end" font-size="9.75" textLength="9.81" lengthAdjust="spacingAndGlyphs">17</text><text x="765.41" y="401.05" text-anchor="end" font-size="9.75" textLength="4.91" lengthAdjust="spacingAndGlyphs">2</text><text x="809.86" y="401.05" text-anchor="end" font-size="9.75" textLength="9.81" lengthAdjust="spacingAndGlyphs">12</text><text x="854.31" y="401.05" text-anchor="end" font-size="9.75" textLength="12.75" lengthAdjust="spacingAndGlyphs">-17</text><text x="720.97" y="414.93" text-anchor="end" font-size="9.75" textLength="9.81" lengthAdjust="spacingAndGlyphs">18</text><text x="765.41" y="414.93" text-anchor="end" font-size="9.75" textLength="4.91" lengthAdjust="spacingAndGlyphs">2</text><text x="809.86" y="414.93" text-anchor="end" font-size="9.75" textLength="9.81" lengthAdjust="spacingAndGlyphs">14</text><text x="854.31" y="414.93" text-anchor="end" font-size="9.75" textLength="12.75" lengthAdjust="spacingAndGlyphs">-53</text><text x="720.97" y="428.82" text-anchor="end" font-size="9.75" textLength="9.81" lengthAdjust="spacingAndGlyphs">19</text><text x="765.41" y="428.82" text-anchor="end" font-size="9.75" textLength="4.91" lengthAdjust="spacingAndGlyphs">1</text><text x="809.86" y="428.82" text-anchor="end" font-size="9.75" textLength="4.91" lengthAdjust="spacingAndGlyphs">8</text><text x="854.31" y="428.82" text-anchor="end" font-size="9.75" textLength="20.11" lengthAdjust="spacingAndGlyphs">-44.5</text><text x="720.97" y="442.70" text-anchor="end" font-size="9.75" textLength="9.81" lengthAdjust="spacingAndGlyphs">20</text><text x="765.41" y="442.70" text-anchor="end" font-size="9.75" textLength="4.91" lengthAdjust="spacingAndGlyphs">2</text><text x="809.86" y="442.70" text-anchor="end" font-size="9.75" textLength="9.81" lengthAdjust="spacingAndGlyphs">15</text><text x="854.31" y="442.70" text-anchor="end" font-size="9.75" textLength="12.75" lengthAdjust="spacingAndGlyphs">-71</text><text x="720.97" y="456.59" text-anchor="end" font-size="9.75" textLength="9.81" lengthAdjust="spacingAndGlyphs">21</text><text x="765.41" y="456.59" text-anchor="end" font-size="9.75" textLength="4.91" lengthAdjust="spacingAndGlyphs">0</text><text x="809.86" y="456.59" text-anchor="end" font-size="9.75" textLength="4.91" lengthAdjust="spacingAndGlyphs">3</text><text x="854.31" y="456.59" text-anchor="end" font-size="9.75" textLength="12.75" lengthAdjust="spacingAndGlyphs">-54</text><text x="720.97" y="470.47" text-anchor="end" font-size="9.75" textLength="9.81" lengthAdjust="spacingAndGlyphs">22</text><text x="765.41" y="470.47" text-anchor="end" font-size="9.75" textLength="4.91" lengthAdjust="spacingAndGlyphs">2</text><text x="809.86" y="470.47" text-anchor="end" font-size="9.75" textLength="9.81" lengthAdjust="spacingAndGlyphs">12</text><text x="854.31" y="470.47" text-anchor="end" font-size="9.75" textLength="12.75" lengthAdjust="spacingAndGlyphs">-17</text><text x="720.97" y="484.36" text-anchor="end" font-size="9.75" textLength="9.81" lengthAdjust="spacingAndGlyphs">23</text><text x="765.41" y="484.36" text-anchor="end" font-size="9.75" textLength="4.91" lengthAdjust="spacingAndGlyphs">1</text><text x="809.86" y="484.36" text-anchor="end" font-size="9.75" textLength="9.81" lengthAdjust="spacingAndGlyphs">18</text><text x="854.31" y="484.36" text-anchor="end" font-size="9.75" textLength="25.02" lengthAdjust="spacingAndGlyphs">-224.5</text><text x="720.97" y="498.24" text-anchor="end" font-size="9.75" textLength="9.81" lengthAdjust="spacingAndGlyphs">24</text><text x="765.41" y="498.24" text-anchor="end" font-size="9.75" textLength="4.91" lengthAdjust="spacingAndGlyphs">2</text><text x="809.86" y="498.24" text-anchor="end" font-size="9.75" textLength="4.91" lengthAdjust="spacingAndGlyphs">6</text><text x="854.31" y="498.24" text-anchor="end" font-size="9.75" textLength="9.81" lengthAdjust="spacingAndGlyphs">91</text><text x="720.97" y="512.12" text-anchor="end" font-size="9.75" textLength="9.81" lengthAdjust="spacingAndGlyphs">25</text><text x="765.41" y="512.12" text-anchor="end" font-size="9.75" textLength="4.91" lengthAdjust="spacingAndGlyphs">0</text><text x="809.86" y="512.12" text-anchor="end" font-size="9.75" textLength="9.81" lengthAdjust="spacingAndGlyphs">10</text><text x="854.31" y="512.12" text-anchor="end" font-size="9.75" textLength="17.66" lengthAdjust="spacingAndGlyphs">-180</text><text x="720.97" y="526.01" text-anchor="end" font-size="9.75" textLength="9.81" lengthAdjust="spacingAndGlyphs">26</text><text x="765.41" y="526.01" text-anchor="end" font-size="9.75" textLength="4.91" lengthAdjust="spacingAndGlyphs">4</text><text x="809.86" y="526.01" text-anchor="end" font-size="9.75" textLength="9.81" lengthAdjust="spacingAndGlyphs">12</text><text x="854.31" y="526.01" text-anchor="end" font-size="9.75" textLength="14.72" lengthAdjust="spacingAndGlyphs">182</text><text x="720.97" y="539.89" text-anchor="end" font-size="9.75" textLength="9.81" lengthAdjust="spacingAndGlyphs">27</text><text x="765.41" y="539.89" text-anchor="end" font-size="9.75" textLength="4.91" lengthAdjust="spacingAndGlyphs">9</text><text x="809.86" y="539.89" text-anchor="end" font-size="9.75" textLength="9.81" lengthAdjust="spacingAndGlyphs">13</text><text x="854.31" y="539.89" text-anchor="end" font-size="9.75" textLength="22.08" lengthAdjust="spacingAndGlyphs">661.5</text><text x="720.97" y="553.78" text-anchor="end" font-size="9.75" textLength="9.81" lengthAdjust="spacingAndGlyphs">28</text><text x="765.41" y="553.78" text-anchor="end" font-size="9.75" textLength="4.91" lengthAdjust="spacingAndGlyphs">3</text><text x="809.86" y="553.78" text-anchor="end" font-size="9.75" textLength="9.81" lengthAdjust="spacingAndGlyphs">13</text><text x="854.31" y="553.78" text-anchor="end" font-size="9.75" textLength="17.17" lengthAdjust="spacingAndGlyphs">64.5</text><text x="720.97" y="567.67" text-anchor="end" font-size="9.75" textLength="9.81" lengthAdjust="spacingAndGlyphs">29</text><text x="765.41" y="567.67" text-anchor="end" font-size="9.75" textLength="4.91" lengthAdjust="spacingAndGlyphs">3</text><text x="809.86" y="567.67" text-anchor="end" font-size="9.75" textLength="9.81" lengthAdjust="spacingAndGlyphs">20</text><text x="854.31" y="567.67" text-anchor="end" font-size="9.75" textLength="20.11" lengthAdjust="spacingAndGlyphs">-61.5</text><text x="720.97" y="581.55" text-anchor="end" font-size="9.75" textLength="9.81" lengthAdjust="spacingAndGlyphs">30</text><text x="765.41" y="581.55" text-anchor="end" font-size="9.75" textLength="4.91" lengthAdjust="spacingAndGlyphs">1</text><text x="809.86" y="581.55" text-anchor="end" font-size="9.75" textLength="9.81" lengthAdjust="spacingAndGlyphs">15</text><text x="854.31" y="581.55" text-anchor="end" font-size="9.75" textLength="25.02" lengthAdjust="spacingAndGlyphs">-170.5</text><text x="19.2" y="609.32" font-size="10" textLength="79.6" lengthAdjust="spacingAndGlyphs">LỜI TRONG THÁNG</text><text x="238.30" y="609.32" text-anchor="end" font-size="9.75" textLength="14.72" lengthAdjust="spacingAndGlyphs">954</text><text x="454.28" y="609.32" text-anchor="end" font-size="9.75" textLength="14.72" lengthAdjust="spacingAndGlyphs">647</text><text x="676.52" y="609.32" text-anchor="end" font-size="9.75" textLength="14.72" lengthAdjust="spacingAndGlyphs">206</text></g><rect x="0" y="141.1" width="874.2" height="13.300000000000011" fill="#e6e6e6"/><rect x="0" y="141.1" width="17.86" height="507.29999999999995" fill="#e6e6e6"/><rect x="0" y="501.525" width="17.86" height="13.885" fill="#d2d2d2"/><rect x="61.96" y="141.1" width="0.7" height="13.300000000000011" fill="#b8b8b8"/><rect x="106.40" y="141.1" width="0.7" height="13.300000000000011" fill="#b8b8b8"/><rect x="150.85" y="141.1" width="0.7" height="13.300000000000011" fill="#b8b8b8"/><rect x="195.30" y="141.1" width="0.7" height="13.300000000000011" fill="#b8b8b8"/><rect x="239.75" y="141.1" width="0.7" height="13.300000000000011" fill="#b8b8b8"/><rect x="284.19" y="141.1" width="0.7" height="13.300000000000011" fill="#b8b8b8"/><rect x="326.56" y="141.1" width="0.7" height="13.300000000000011" fill="#b8b8b8"/><rect x="368.92" y="141.1" width="0.7" height="13.300000000000011" fill="#b8b8b8"/><rect x="411.29" y="141.1" width="0.7" height="13.300000000000011" fill="#b8b8b8"/><rect x="455.73" y="141.1" width="0.7" height="13.300000000000011" fill="#b8b8b8"/><rect x="500.18" y="141.1" width="0.7" height="13.300000000000011" fill="#b8b8b8"/><rect x="544.63" y="141.1" width="0.7" height="13.300000000000011" fill="#b8b8b8"/><rect x="589.08" y="141.1" width="0.7" height="13.300000000000011" fill="#b8b8b8"/><rect x="633.52" y="141.1" width="0.7" height="13.300000000000011" fill="#b8b8b8"/><rect x="677.97" y="141.1" width="0.7" height="13.300000000000011" fill="#b8b8b8"/><rect x="722.42" y="141.1" width="0.7" height="13.300000000000011" fill="#b8b8b8"/><rect x="766.86" y="141.1" width="0.7" height="13.300000000000011" fill="#b8b8b8"/><rect x="811.31" y="141.1" width="0.7" height="13.300000000000011" fill="#b8b8b8"/><rect x="855.76" y="141.1" width="0.7" height="13.300000000000011" fill="#b8b8b8"/><rect x="0" y="153.70" width="874.2" height="0.8" fill="#bcbcbc"/><rect x="17.36" y="141.1" width="0.8" height="507.29999999999995" fill="#bcbcbc"/><rect x="0" y="167.94" width="17.86" height="0.7" fill="#cfcfcf"/><rect x="0" y="181.82" width="17.86" height="0.7" fill="#cfcfcf"/><rect x="0" y="195.71" width="17.86" height="0.7" fill="#cfcfcf"/><rect x="0" y="209.59" width="17.86" height="0.7" fill="#cfcfcf"/><rect x="0" y="223.47" width="17.86" height="0.7" fill="#cfcfcf"/><rect x="0" y="237.36" width="17.86" height="0.7" fill="#cfcfcf"/><rect x="0" y="251.25" width="17.86" height="0.7" fill="#cfcfcf"/><rect x="0" y="265.13" width="17.86" height="0.7" fill="#cfcfcf"/><rect x="0" y="279.01" width="17.86" height="0.7" fill="#cfcfcf"/><rect x="0" y="292.90" width="17.86" height="0.7" fill="#cfcfcf"/><rect x="0" y="306.78" width="17.86" height="0.7" fill="#cfcfcf"/><rect x="0" y="320.67" width="17.86" height="0.7" fill="#cfcfcf"/><rect x="0" y="334.55" width="17.86" height="0.7" fill="#cfcfcf"/><rect x="0" y="348.44" width="17.86" height="0.7" fill="#cfcfcf"/><rect x="0" y="362.32" width="17.86" height="0.7" fill="#cfcfcf"/><rect x="0" y="376.21" width="17.86" height="0.7" fill="#cfcfcf"/><rect x="0" y="390.09" width="17.86" height="0.7" fill="#cfcfcf"/><rect x="0" y="403.98" width="17.86" height="0.7" fill="#cfcfcf"/><rect x="0" y="417.87" width="17.86" height="0.7" fill="#cfcfcf"/><rect x="0" y="431.75" width="17.86" height="0.7" fill="#cfcfcf"/><rect x="0" y="445.63" width="17.86" height="0.7" fill="#cfcfcf"/><rect x="0" y="459.52" width="17.86" height="0.7" fill="#cfcfcf"/><rect x="0" y="473.40" width="17.86" height="0.7" fill="#cfcfcf"/><rect x="0" y="487.29" width="17.86" height="0.7" fill="#cfcfcf"/><rect x="0" y="501.17" width="17.86" height="0.7" fill="#cfcfcf"/><rect x="0" y="515.06" width="17.86" height="0.7" fill="#cfcfcf"/><rect x="0" y="528.94" width="17.86" height="0.7" fill="#cfcfcf"/><rect x="0" y="542.83" width="17.86" height="0.7" fill="#cfcfcf"/><rect x="0" y="556.72" width="17.86" height="0.7" fill="#cfcfcf"/><rect x="0" y="570.60" width="17.86" height="0.7" fill="#cfcfcf"/><rect x="0" y="584.49" width="17.86" height="0.7" fill="#cfcfcf"/><rect x="0" y="598.37" width="17.86" height="0.7" fill="#cfcfcf"/><rect x="0" y="612.25" width="17.86" height="0.7" fill="#cfcfcf"/><rect x="0" y="626.14" width="17.86" height="0.7" fill="#cfcfcf"/><rect x="0" y="640.02" width="17.86" height="0.7" fill="#cfcfcf"/><rect x="17.06" y="501.525" width="1" height="13.885" fill="#217346"/><path d="M15.2 144.2 L15.2 151.8 L7.6 151.8 Z" fill="#b4b4b4"/><g font-family="Liberation Sans" font-size="8.8" fill="#333" stroke="#333" stroke-width="0.08"><text x="40.08" y="151.3" text-anchor="middle" fill="#222">A</text><text x="84.53" y="151.3" text-anchor="middle" fill="#222">B</text><text x="128.98" y="151.3" text-anchor="middle" fill="#222">C</text><text x="173.43" y="151.3" text-anchor="middle" fill="#222">D</text><text x="217.87" y="151.3" text-anchor="middle" fill="#222">E</text><text x="262.32" y="151.3" text-anchor="middle" fill="#222">F</text><text x="305.73" y="151.3" text-anchor="middle" fill="#222">G</text><text x="348.09" y="151.3" text-anchor="middle" fill="#222">H</text><text x="390.45" y="151.3" text-anchor="middle" fill="#222">I</text><text x="433.86" y="151.3" text-anchor="middle" fill="#222">J</text><text x="478.31" y="151.3" text-anchor="middle" fill="#222">K</text><text x="522.75" y="151.3" text-anchor="middle" fill="#222">L</text><text x="567.20" y="151.3" text-anchor="middle" fill="#222">M</text><text x="611.65" y="151.3" text-anchor="middle" fill="#222">N</text><text x="656.10" y="151.3" text-anchor="middle" fill="#222">O</text><text x="700.54" y="151.3" text-anchor="middle" fill="#222">P</text><text x="744.99" y="151.3" text-anchor="middle" fill="#222">Q</text><text x="789.44" y="151.3" text-anchor="middle" fill="#222">R</text><text x="833.89" y="151.3" text-anchor="middle" fill="#222">S</text><text x="8.9" y="165.40" text-anchor="middle" fill="#333" stroke="#333" font-size="9.4" textLength="4.81" lengthAdjust="spacingAndGlyphs">1</text><text x="8.9" y="179.28" text-anchor="middle" fill="#333" stroke="#333" font-size="9.4" textLength="4.81" lengthAdjust="spacingAndGlyphs">2</text><text x="8.9" y="193.17" text-anchor="middle" fill="#333" stroke="#333" font-size="9.4" textLength="4.81" lengthAdjust="spacingAndGlyphs">3</text><text x="8.9" y="207.06" text-anchor="middle" fill="#333" stroke="#333" font-size="9.4" textLength="4.81" lengthAdjust="spacingAndGlyphs">4</text><text x="8.9" y="220.94" text-anchor="middle" fill="#333" stroke="#333" font-size="9.4" textLength="4.81" lengthAdjust="spacingAndGlyphs">5</text><text x="8.9" y="234.82" text-anchor="middle" fill="#333" stroke="#333" font-size="9.4" textLength="4.81" lengthAdjust="spacingAndGlyphs">6</text><text x="8.9" y="248.71" text-anchor="middle" fill="#333" stroke="#333" font-size="9.4" textLength="4.81" lengthAdjust="spacingAndGlyphs">7</text><text x="8.9" y="262.60" text-anchor="middle" fill="#333" stroke="#333" font-size="9.4" textLength="4.81" lengthAdjust="spacingAndGlyphs">8</text><text x="8.9" y="276.48" text-anchor="middle" fill="#333" stroke="#333" font-size="9.4" textLength="4.81" lengthAdjust="spacingAndGlyphs">9</text><text x="8.9" y="290.37" text-anchor="middle" fill="#333" stroke="#333" font-size="9.4" textLength="9.62" lengthAdjust="spacingAndGlyphs">10</text><text x="8.9" y="304.25" text-anchor="middle" fill="#333" stroke="#333" font-size="9.4" textLength="8.98" lengthAdjust="spacingAndGlyphs">11</text><text x="8.9" y="318.13" text-anchor="middle" fill="#333" stroke="#333" font-size="9.4" textLength="9.62" lengthAdjust="spacingAndGlyphs">12</text><text x="8.9" y="332.02" text-anchor="middle" fill="#333" stroke="#333" font-size="9.4" textLength="9.62" lengthAdjust="spacingAndGlyphs">13</text><text x="8.9" y="345.90" text-anchor="middle" fill="#333" stroke="#333" font-size="9.4" textLength="9.62" lengthAdjust="spacingAndGlyphs">14</text><text x="8.9" y="359.79" text-anchor="middle" fill="#333" stroke="#333" font-size="9.4" textLength="9.62" lengthAdjust="spacingAndGlyphs">15</text><text x="8.9" y="373.68" text-anchor="middle" fill="#333" stroke="#333" font-size="9.4" textLength="9.62" lengthAdjust="spacingAndGlyphs">16</text><text x="8.9" y="387.56" text-anchor="middle" fill="#333" stroke="#333" font-size="9.4" textLength="9.62" lengthAdjust="spacingAndGlyphs">17</text><text x="8.9" y="401.44" text-anchor="middle" fill="#333" stroke="#333" font-size="9.4" textLength="9.62" lengthAdjust="spacingAndGlyphs">18</text><text x="8.9" y="415.33" text-anchor="middle" fill="#333" stroke="#333" font-size="9.4" textLength="9.62" lengthAdjust="spacingAndGlyphs">19</text><text x="8.9" y="429.22" text-anchor="middle" fill="#333" stroke="#333" font-size="9.4" textLength="9.62" lengthAdjust="spacingAndGlyphs">20</text><text x="8.9" y="443.10" text-anchor="middle" fill="#333" stroke="#333" font-size="9.4" textLength="9.62" lengthAdjust="spacingAndGlyphs">21</text><text x="8.9" y="456.99" text-anchor="middle" fill="#333" stroke="#333" font-size="9.4" textLength="9.62" lengthAdjust="spacingAndGlyphs">22</text><text x="8.9" y="470.87" text-anchor="middle" fill="#333" stroke="#333" font-size="9.4" textLength="9.62" lengthAdjust="spacingAndGlyphs">23</text><text x="8.9" y="484.75" text-anchor="middle" fill="#333" stroke="#333" font-size="9.4" textLength="9.62" lengthAdjust="spacingAndGlyphs">24</text><text x="8.9" y="498.64" text-anchor="middle" fill="#333" stroke="#333" font-size="9.4" textLength="9.62" lengthAdjust="spacingAndGlyphs">25</text><text x="8.9" y="512.52" text-anchor="middle" fill="#217346" stroke="#217346" font-size="9.4" textLength="9.62" lengthAdjust="spacingAndGlyphs">26</text><text x="8.9" y="526.41" text-anchor="middle" fill="#333" stroke="#333" font-size="9.4" textLength="9.62" lengthAdjust="spacingAndGlyphs">27</text><text x="8.9" y="540.29" text-anchor="middle" fill="#333" stroke="#333" font-size="9.4" textLength="9.62" lengthAdjust="spacingAndGlyphs">28</text><text x="8.9" y="554.18" text-anchor="middle" fill="#333" stroke="#333" font-size="9.4" textLength="9.62" lengthAdjust="spacingAndGlyphs">29</text><text x="8.9" y="568.07" text-anchor="middle" fill="#333" stroke="#333" font-size="9.4" textLength="9.62" lengthAdjust="spacingAndGlyphs">30</text><text x="8.9" y="581.95" text-anchor="middle" fill="#333" stroke="#333" font-size="9.4" textLength="9.62" lengthAdjust="spacingAndGlyphs">31</text><text x="8.9" y="595.84" text-anchor="middle" fill="#333" stroke="#333" font-size="9.4" textLength="9.62" lengthAdjust="spacingAndGlyphs">32</text><text x="8.9" y="609.72" text-anchor="middle" fill="#333" stroke="#333" font-size="9.4" textLength="9.62" lengthAdjust="spacingAndGlyphs">33</text><text x="8.9" y="623.61" text-anchor="middle" fill="#333" stroke="#333" font-size="9.4" textLength="9.62" lengthAdjust="spacingAndGlyphs">34</text><text x="8.9" y="637.49" text-anchor="middle" fill="#333" stroke="#333" font-size="9.4" textLength="9.62" lengthAdjust="spacingAndGlyphs">35</text><text x="8.9" y="651.38" text-anchor="middle" fill="#333" stroke="#333" font-size="9.4" textLength="9.62" lengthAdjust="spacingAndGlyphs">36</text></g></g>
<g font-family="Liberation Sans"><rect x="0" y="0" width="889" height="44" fill="#217346"/><rect x="614" y="1.8" width="63" height="32.2" rx="15" fill="#1f6a40"/><path d="M729 0 H802 Q800 22 770 25 Q740 26 729 18 Z" fill="#1f6a40"/><circle cx="855" cy="23.4" r="11" fill="#1f6a40"/><rect x="42" y="23.6" width="42" height="21" fill="#f3f3f3"/><path d="M15.9 7.6 H24.6 V16.4 H15.9 Z" fill="none" stroke="#fff" stroke-width="1.2"/><rect x="15.9" y="10.6" width="8.7" height="1.1" fill="#fff"/><path d="M17.6 16.4 V13.4 H22.9 V16.4" fill="none" stroke="#fff" stroke-width="1.1"/><rect x="19.6" y="14.6" width="1.2" height="1.8" fill="#fff"/><path d="M36.6 10.2 H41.2 Q44.6 10.4 44.6 13 Q44.4 15.6 41.4 16.4" fill="none" stroke="#78aa8c" stroke-width="1.05"/><path d="M38.8 7.8 L36.2 10.2 L38.8 12.6" fill="none" stroke="#78aa8c" stroke-width="1.05"/><path d="M49.75 10.68 L52.65 10.68 L51.20 12.12 Z" fill="#78aa8c"/><path d="M68.8 10.2 H64.2 Q60.8 10.4 60.8 13 Q61 15.6 64 16.4" fill="none" stroke="#78aa8c" stroke-width="1.05"/><path d="M66.6 7.8 L69.2 10.2 L66.6 12.6" fill="none" stroke="#78aa8c" stroke-width="1.05"/><path d="M73.95 10.68 L76.85 10.68 L75.40 12.12 Z" fill="#78aa8c"/><rect x="87.2" y="9.2" width="2.8" height="0.7" fill="#fff"/><rect x="87.2" y="10.4" width="2.8" height="0.7" fill="#fff"/><path d="M86.9 11.9 H90.3 L88.6 13.6 Z" fill="#fff"/><text x="321.60" y="13.90" font-size="8.4" fill="#fff" font-weight="normal" textLength="245.20" lengthAdjust="spacingAndGlyphs" style="white-space:pre" >thong ke lo dan mien nam theo cau  [Compatibility Mode]  -  Excel</text><text x="721.60" y="13.70" font-size="8.4" fill="#fff" font-weight="normal" textLength="32.80" lengthAdjust="spacingAndGlyphs" style="white-space:pre" >Kien truc</text><rect x="772.2" y="7.6" width="9.4" height="6.6" fill="none" stroke="#fff" stroke-width="0.9"/><path d="M772.2 9.6 H781.6" stroke="#fff" stroke-width="0.9"/><path d="M776.9 13 V10.4 M775.6 11.6 L776.9 10.4 L778.2 11.6" stroke="#fff" stroke-width="0.8" fill="none"/><rect x="805.2" y="10.2" width="7.6" height="0.9" fill="#fff"/><rect x="837.3" y="8.9" width="6.2" height="5.6" fill="none" stroke="#fff" stroke-width="0.8"/><path d="M838.8 8.9 V7.4 H845 V13 H843.5" fill="none" stroke="#fff" stroke-width="0.8"/><path d="M869.6 7.2 L876.8 14.4 M876.8 7.2 L869.6 14.4" stroke="#fff" stroke-width="0.9"/><text x="13.40" y="36.70" font-size="8.4" fill="#fff" font-weight="normal" textLength="13.50" lengthAdjust="spacingAndGlyphs" style="white-space:pre" >File</text><text x="94.40" y="36.70" font-size="8.4" fill="#fff" font-weight="normal" textLength="20.40" lengthAdjust="spacingAndGlyphs" style="white-space:pre" >Insert</text><text x="134.50" y="36.70" font-size="8.4" fill="#fff" font-weight="normal" textLength="45.30" lengthAdjust="spacingAndGlyphs" style="white-space:pre" >Page Layout</text><text x="199.90" y="36.70" font-size="8.4" fill="#fff" font-weight="normal" textLength="34.20" lengthAdjust="spacingAndGlyphs" style="white-space:pre" >Formulas</text><text x="254.20" y="36.70" font-size="8.4" fill="#fff" font-weight="normal" textLength="16.60" lengthAdjust="spacingAndGlyphs" style="white-space:pre" >Data</text><text x="291.20" y="36.70" font-size="8.4" fill="#fff" font-weight="normal" textLength="25.60" lengthAdjust="spacingAndGlyphs" style="white-space:pre" >Review</text><text x="336.30" y="36.70" font-size="8.4" fill="#fff" font-weight="normal" textLength="17.80" lengthAdjust="spacingAndGlyphs" style="white-space:pre" >View</text><text x="386.00" y="36.70" font-size="8.4" fill="#fff" font-weight="normal" textLength="105.20" lengthAdjust="spacingAndGlyphs" style="white-space:pre" >Tell me what you want to do</text><text x="863.60" y="36.70" font-size="8.4" fill="#fff" font-weight="normal" textLength="20.40" lengthAdjust="spacingAndGlyphs" style="white-space:pre" >Share</text><text x="51.50" y="36.70" font-size="8.4" fill="#217346" font-weight="normal" textLength="23.30" lengthAdjust="spacingAndGlyphs" style="white-space:pre" >Home</text><path d="M375.4 35.2 Q373.4 33 373.8 30.6 Q374.6 27.6 378.1 27.6 Q381.6 27.6 382.4 30.6 Q382.8 33 380.8 35.2 V37 H375.4 Z" fill="none" stroke="#fff" stroke-width="0.85"/><path d="M376 38.4 H380.2" stroke="#fff" stroke-width="0.85"/><path d="M848.6 32 V38.2 H857.6 V35.8" fill="none" stroke="#fff" stroke-width="0.85"/><path d="M850.6 36.2 Q851.4 31.6 856.6 31.4 M854.6 29.2 L857.4 31.4 L854.8 33.6" fill="none" stroke="#fff" stroke-width="0.85"/><rect x="0" y="44" width="889" height="64" fill="#f3f3f3"/><rect x="0" y="107.6" width="889" height="0.9" fill="#d6d6d6"/><rect x="9.1" y="52.4" width="16.5" height="16.6" fill="#d9d6db"/><rect x="12.8" y="52.2" width="9.1" height="2.6" fill="#b9b9b9"/><rect x="15.8" y="50.2" width="3.4" height="2.4" fill="#b9b9b9"/><path d="M19.4 57.6 H25.8 L28.5 60.3 V70.5 H19.4 Z" fill="#f4f0f6" stroke="#cfcfcf" stroke-width="0.7"/><path d="M25.8 57.6 V60.3 H28.5" fill="none" stroke="#cfcfcf" stroke-width="0.6"/><path d="M36.6 49 L41.8 56.4 M42.4 49 L37.2 56.4" stroke="#2b2b2b" stroke-width="1.1"/><ellipse cx="36.8" cy="57.6" rx="2" ry="1.6" fill="none" stroke="#3a78c0" stroke-width="0.9"/><ellipse cx="42.2" cy="57.6" rx="2" ry="1.6" fill="none" stroke="#3a78c0" stroke-width="0.9"/><path d="M34.4 65.2 H38.2 L39.6 66.6 V73 H34.4 Z" fill="#fff" stroke="#555" stroke-width="0.8"/><path d="M38.4 67.6 H42.4 L44.6 69.8 V75.2 H38.4 Z" fill="#fff" stroke="#555" stroke-width="0.8"/><rect x="35.6" y="67" width="1.2" height="3" fill="#3a78c0"/><rect x="39.8" y="71.4" width="3.4" height="2.2" fill="#5b93d3"/><path d="M49.56 69.43 L53.04 69.43 L51.30 71.17 Z" fill="#444"/><path d="M34.4 87.6 L38.6 84.4 L41.2 87.8 L37.4 91 Z" fill="#e3b160"/><path d="M38.8 84 L43.6 81 L45 82.6 L41.4 87.4 Z" fill="#4a4a4a"/><text x="8.10" y="81.60" font-size="8.3" fill="#a6a6a6" font-weight="normal" textLength="19.10" lengthAdjust="spacingAndGlyphs" style="white-space:pre" >Paste</text><path d="M15.66 87.93 L19.14 87.93 L17.40 89.67 Z" fill="#b4b4b4"/><text x="6.60" y="105.80" font-size="8.3" fill="#333" font-weight="normal" textLength="34.70" lengthAdjust="spacingAndGlyphs" style="white-space:pre" >Clipboard</text><path d="M51.3 105.4 V101.4 H55.3" stroke="#777" stroke-width="0.7" fill="none"/><path d="M52.8 102.9 L55.8 105.9 M55.8 103.9 V105.9 H53.8" stroke="#777" stroke-width="0.7" fill="none"/><rect x="59.10" y="47" width="0.8" height="58.00" fill="#d9d9d9"/><rect x="62.7" y="52.4" width="76.6" height="15.2" fill="#fff" stroke="#c6c6c6" stroke-width="0.7"/><rect x="139.3" y="52.4" width="30.1" height="15.2" fill="#fff" stroke="#c6c6c6" stroke-width="0.7"/><text x="64.70" y="63.40" font-size="8.6" fill="#222" font-weight="normal" textLength="23.70" lengthAdjust="spacingAndGlyphs" style="white-space:pre" >Calibri</text><path d="M132.27 59.19 L136.33 59.19 L134.30 61.22 Z" fill="#444"/><text x="142.40" y="63.40" font-size="8.6" fill="#222" font-weight="normal" textLength="7.00" lengthAdjust="spacingAndGlyphs" style="white-space:pre" >11</text><path d="M161.97 59.19 L166.03 59.19 L164.00 61.22 Z" fill="#444"/><text x="173.60" y="64.00" font-size="9.6" fill="#444" font-weight="normal" textLength="7.60" lengthAdjust="spacingAndGlyphs" style="white-space:pre" >A</text><path d="M181 57 L182.4 55.4 L183.8 57 Z" fill="#3a78c0"/><text x="189.60" y="64.00" font-size="8" fill="#444" font-weight="normal" textLength="6.20" lengthAdjust="spacingAndGlyphs" style="white-space:pre" >A</text><path d="M196 55.6 L197.4 57.2 L198.8 55.6 Z" fill="#3a78c0"/><text x="66.40" y="84.20" font-size="8.8" fill="#444" font-weight="bold" textLength="5.90" lengthAdjust="spacingAndGlyphs" style="white-space:pre" >B</text><text x="82.8" y="84.2" font-size="8.8" fill="#444" font-style="italic" font-family="Liberation Serif">I</text><text x="97.10" y="83.60" font-size="8.8" fill="#444" font-weight="normal" textLength="6.80" lengthAdjust="spacingAndGlyphs" style="white-space:pre" >U</text><rect x="97" y="85.2" width="7" height="0.8" fill="#444"/><path d="M110.26 80.73 L113.74 80.73 L112.00 82.47 Z" fill="#444"/><rect x="119.20" y="74.5" width="0.8" height="14.00" fill="#d0d0d0"/><rect x="125.8" y="76.4" width="9" height="9" fill="none" stroke="#bbb" stroke-width="0.8" stroke-dasharray="1 0.8"/><path d="M130.3 76.4 V85.4 M125.8 80.9 H134.8" stroke="#bbb" stroke-width="0.7" stroke-dasharray="1 0.8"/><path d="M140.16 80.73 L143.64 80.73 L141.90 82.47 Z" fill="#444"/><rect x="149.20" y="74.5" width="0.8" height="14.00" fill="#d0d0d0"/><path d="M156.6 80.6 L160 77 L164 80.6 L160.4 84 Z" fill="none" stroke="#555" stroke-width="0.8"/><path d="M164.2 80.8 Q165.6 82.6 164.6 83.4" fill="none" stroke="#3a78c0" stroke-width="1"/><rect x="155" y="84.2" width="11" height="2.4" fill="#ffff00"/><path d="M172.16 80.73 L175.64 80.73 L173.90 82.47 Z" fill="#444"/><text x="179.60" y="83.60" font-size="9" fill="#444" font-weight="normal" textLength="8.80" lengthAdjust="spacingAndGlyphs" style="white-space:pre" >A</text><rect x="178.1" y="84.2" width="11.9" height="2.4" fill="#ff0000"/><path d="M193.76 80.73 L197.24 80.73 L195.50 82.47 Z" fill="#444"/><text x="117.80" y="105.50" font-size="8.3" fill="#333" font-weight="normal" textLength="15.60" lengthAdjust="spacingAndGlyphs" style="white-space:pre" >Font</text><path d="M195.6 105.4 V101.4 H199.6" stroke="#777" stroke-width="0.7" fill="none"/><path d="M197.1 102.9 L200.1 105.9 M200.1 103.9 V105.9 H198.1" stroke="#777" stroke-width="0.7" fill="none"/><rect x="203.00" y="47" width="0.8" height="58.00" fill="#d9d9d9"/><rect x="209.00" y="53.80" width="9.8" height="0.8" fill="#555"/><rect x="209.00" y="56.00" width="9.8" height="0.8" fill="#555"/><rect x="224.00" y="57.00" width="9.8" height="0.8" fill="#555"/><rect x="224.00" y="59.20" width="9.8" height="0.8" fill="#555"/><rect x="224.00" y="61.40" width="9.8" height="0.8" fill="#555"/><rect x="236.8" y="52.1" width="15.2" height="15.4" fill="#c6c6c6"/><rect x="239.40" y="60.20" width="10" height="0.8" fill="#555"/><rect x="239.40" y="62.60" width="10" height="0.8" fill="#555"/><rect x="255.20" y="52.5" width="0.8" height="14.50" fill="#d9d9d9"/><text x="0" y="0" font-size="6.6" fill="#555" transform="translate(262.2 63.4) rotate(-48)">ab</text><path d="M265.2 64.6 L271.2 58.2 M269 58.6 L271.4 58 L270.8 60.4" fill="none" stroke="#555" stroke-width="0.75"/><path d="M274.16 59.33 L277.64 59.33 L275.90 61.07 Z" fill="#444"/><rect x="209.00" y="76.40" width="9.8" height="0.8" fill="#555"/><rect x="209.00" y="78.70" width="6.4" height="0.8" fill="#555"/><rect x="209.00" y="81.00" width="9.8" height="0.8" fill="#555"/><rect x="209.00" y="83.30" width="6.4" height="0.8" fill="#555"/><rect x="224.00" y="76.40" width="9.8" height="0.8" fill="#555"/><rect x="225.70" y="78.70" width="6.4" height="0.8" fill="#555"/><rect x="224.00" y="81.00" width="9.8" height="0.8" fill="#555"/><rect x="225.70" y="83.30" width="6.4" height="0.8" fill="#555"/><rect x="239.60" y="76.40" width="9.8" height="0.8" fill="#555"/><rect x="243.00" y="78.70" width="6.4" height="0.8" fill="#555"/><rect x="239.60" y="81.00" width="9.8" height="0.8" fill="#555"/><rect x="243.00" y="83.30" width="6.4" height="0.8" fill="#555"/><rect x="255.20" y="75.5" width="0.8" height="13.00" fill="#d9d9d9"/><rect x="260.00" y="76.20" width="11.4" height="0.8" fill="#777"/><rect x="264.80" y="78.40" width="6.6" height="0.8" fill="#777"/><rect x="264.80" y="80.60" width="6.6" height="0.8" fill="#777"/><rect x="264.80" y="82.80" width="6.6" height="0.8" fill="#777"/><rect x="260.00" y="85.00" width="11.4" height="0.8" fill="#777"/><path d="M265 80.6 H260.4 M262.2 78.8 L260.4 80.6 L262.2 82.4" fill="none" stroke="#3a78c0" stroke-width="0.9"/><rect x="275.40" y="76.20" width="11.4" height="0.8" fill="#777"/><rect x="280.20" y="78.40" width="6.6" height="0.8" fill="#777"/><rect x="280.20" y="80.60" width="6.6" height="0.8" fill="#777"/><rect x="280.20" y="82.80" width="6.6" height="0.8" fill="#777"/><rect x="275.40" y="85.00" width="11.4" height="0.8" fill="#777"/><path d="M275.6 80.6 H280.4 M278.6 78.8 L280.4 80.6 L278.6 82.4" fill="none" stroke="#3a78c0" stroke-width="0.9"/><rect x="291.90" y="51.5" width="0.8" height="38.50" fill="#d9d9d9"/><text x="298.4" y="59.2" font-size="6.4" fill="#444">ab</text><text x="298.6" y="64.4" font-size="6.2" fill="#444">c</text><path d="M303.8 62.6 L305 63.6 L306.8 61.2" fill="none" stroke="#3a78c0" stroke-width="0.8"/><text x="310.60" y="63.20" font-size="8.3" fill="#444" font-weight="normal" textLength="35.90" lengthAdjust="spacingAndGlyphs" style="white-space:pre" >Wrap Text</text><rect x="297.6" y="76" width="9.8" height="9.6" fill="#fff" stroke="#666" stroke-width="0.8"/><path d="M297.6 77.9 H307.4 M297.6 83.7 H307.4 M302.5 76 V77.9 M302.5 83.7 V85.6" stroke="#666" stroke-width="0.6"/><path d="M299.2 80.8 H305.8 M300.4 79.8 L299.2 80.8 L300.4 81.8 M304.6 79.8 L305.8 80.8 L304.6 81.8" fill="none" stroke="#3a78c0" stroke-width="0.7"/><text x="310.60" y="85.20" font-size="8.3" fill="#444" font-weight="normal" textLength="59.00" lengthAdjust="spacingAndGlyphs" style="white-space:pre" >Merge &amp; Center</text><path d="M376.06 80.93 L379.54 80.93 L377.80 82.67 Z" fill="#444"/><text x="272.20" y="105.50" font-size="8.3" fill="#333" font-weight="normal" textLength="34.40" lengthAdjust="spacingAndGlyphs" style="white-space:pre" >Alignment</text><path d="M378.6 105.4 V101.4 H382.6" stroke="#777" stroke-width="0.7" fill="none"/><path d="M380.1 102.9 L383.1 105.9 M383.1 103.9 V105.9 H381.1" stroke="#777" stroke-width="0.7" fill="none"/><rect x="386.00" y="47" width="0.8" height="58.00" fill="#d9d9d9"/><rect x="389.9" y="52.6" width="90.5" height="14.8" fill="#fff" stroke="#c6c6c6" stroke-width="0.7"/><text x="392.20" y="63.20" font-size="8.6" fill="#222" font-weight="normal" textLength="27.20" lengthAdjust="spacingAndGlyphs" style="white-space:pre" >General</text><path d="M472.97 59.19 L477.03 59.19 L475.00 61.22 Z" fill="#444"/><text x="394.40" y="85.60" font-size="10" fill="#444" font-weight="normal" textLength="6.40" lengthAdjust="spacingAndGlyphs" style="white-space:pre" >$</text><path d="M406.66 80.73 L410.14 80.73 L408.40 82.47 Z" fill="#444"/><text x="416.90" y="85.60" font-size="10" fill="#444" font-weight="normal" textLength="9.10" lengthAdjust="spacingAndGlyphs" style="white-space:pre" >%</text><text x="434.6" y="82.4" font-size="9" fill="#444" font-weight="bold">,</text><rect x="446.60" y="75.5" width="0.8" height="13.00" fill="#d0d0d0"/><text x="456" y="80.8" font-size="5" fill="#444">0</text><text x="453.6" y="86.4" font-size="5" fill="#444">.00</text><path d="M456 78.6 H452.6 M453.8 77.4 L452.6 78.6 L453.8 79.8" fill="none" stroke="#3a78c0" stroke-width="0.7"/><text x="469.4" y="80.8" font-size="5" fill="#444">.00</text><text x="474.2" y="86.4" font-size="5" fill="#444">0</text><path d="M467 84.4 H471.4 M470.2 83.2 L471.4 84.4 L470.2 85.6" fill="none" stroke="#3a78c0" stroke-width="0.7"/><text x="416.60" y="105.50" font-size="8.3" fill="#333" font-weight="normal" textLength="26.00" lengthAdjust="spacingAndGlyphs" style="white-space:pre" >Number</text><path d="M477.6 105.4 V101.4 H481.6" stroke="#777" stroke-width="0.7" fill="none"/><path d="M479.1 102.9 L482.1 105.9 M482.1 103.9 V105.9 H480.1" stroke="#777" stroke-width="0.7" fill="none"/><rect x="483.60" y="47" width="0.8" height="58.00" fill="#d9d9d9"/><rect x="502.2" y="50.6" width="14" height="16" fill="#fff" stroke="#888" stroke-width="0.6"/><path d="M502.2 54.6 H516.2" stroke="#aaa" stroke-width="0.5"/><path d="M502.2 58.6 H516.2" stroke="#aaa" stroke-width="0.5"/><path d="M502.2 62.6 H516.2" stroke="#aaa" stroke-width="0.5"/><path d="M506.8 50.6 V66.6 M511.4 50.6 V66.6" stroke="#aaa" stroke-width="0.5"/><rect x="507" y="51" width="4.4" height="3.4" fill="#e8663a"/><rect x="507" y="55" width="8.8" height="3.4" fill="#3a78c0"/><rect x="507" y="59" width="6.4" height="3.4" fill="#e8663a"/><rect x="507" y="63" width="3.6" height="3.4" fill="#3a78c0"/><rect x="514" y="62" width="9" height="8.6" fill="#fff" stroke="#666" stroke-width="0.7"/><text x="515.6" y="69" font-size="7" fill="#444">≠</text><text x="490.20" y="81.10" font-size="8.3" fill="#444" font-weight="normal" textLength="42.80" lengthAdjust="spacingAndGlyphs" style="white-space:pre" >Conditional</text><text x="488.50" y="92.90" font-size="8.3" fill="#444" font-weight="normal" textLength="37.90" lengthAdjust="spacingAndGlyphs" style="white-space:pre" >Formatting</text><path d="M529.90 88.60 L533.10 88.60 L531.50 90.20 Z" fill="#444"/><rect x="547" y="51.4" width="17" height="15" fill="#fff" stroke="#888" stroke-width="0.6"/><rect x="547" y="51.4" width="17" height="3.4" fill="#9cb8d8"/><path d="M547 55.15 H564" stroke="#aaa" stroke-width="0.5"/><path d="M547 58.90 H564" stroke="#aaa" stroke-width="0.5"/><path d="M547 62.65 H564" stroke="#aaa" stroke-width="0.5"/><path d="M552.6 51.4 V66.4 M558.2 51.4 V66.4" stroke="#aaa" stroke-width="0.5"/><rect x="549" y="56" width="11" height="8" fill="#c9d8ea" opacity="0.8"/><path d="M568.4 56.6 L562.4 65" stroke="#7a7a7a" stroke-width="2.2"/><path d="M562.2 64.4 Q557 66 556.4 70.8 Q561 71 563.4 66.6 Z" fill="#3a78c0"/><text x="538.60" y="81.10" font-size="8.3" fill="#444" font-weight="normal" textLength="35.80" lengthAdjust="spacingAndGlyphs" style="white-space:pre" >Format as</text><text x="544.30" y="92.90" font-size="8.3" fill="#444" font-weight="normal" textLength="19.30" lengthAdjust="spacingAndGlyphs" style="white-space:pre" >Table</text><path d="M565.40 88.60 L568.60 88.60 L567.00 90.20 Z" fill="#444"/><rect x="582" y="51.4" width="17" height="15" fill="#fff" stroke="#888" stroke-width="0.6"/><rect x="584.2" y="53.6" width="12.6" height="10.6" fill="#c9d8ea"/><path d="M582 54.2 H599 M582 63.6 H599 M584.6 51.4 V66.4 M596.4 51.4 V66.4" stroke="#aaa" stroke-width="0.5"/><path d="M602.8 56.6 L596.8 65" stroke="#7a7a7a" stroke-width="2.2"/><path d="M596.6 64.4 Q591.4 66 590.8 70.8 Q595.4 71 597.8 66.6 Z" fill="#3a78c0"/><text x="584.60" y="81.10" font-size="8.3" fill="#444" font-weight="normal" textLength="13.20" lengthAdjust="spacingAndGlyphs" style="white-space:pre" >Cell</text><text x="577.80" y="92.90" font-size="8.3" fill="#444" font-weight="normal" textLength="21.80" lengthAdjust="spacingAndGlyphs" style="white-space:pre" >Styles</text><path d="M601.61 88.60 L604.80 88.60 L603.20 90.20 Z" fill="#444"/><text x="536.60" y="105.50" font-size="8.3" fill="#333" font-weight="normal" textLength="19.40" lengthAdjust="spacingAndGlyphs" style="white-space:pre" >Styles</text><rect x="609.00" y="47" width="0.8" height="58.00" fill="#d9d9d9"/><rect x="618.2" y="50" width="9" height="3.2" fill="#fff" stroke="#777" stroke-width="0.6"/><path d="M622.70 50 V53.2" stroke="#777" stroke-width="0.5"/><rect x="618.2" y="61.8" width="9" height="6.8" fill="#fff" stroke="#777" stroke-width="0.6"/><path d="M622.70 61.8 V68.6" stroke="#777" stroke-width="0.5"/><path d="M618.2 65.20 H627.2" stroke="#777" stroke-width="0.5"/><rect x="626.6" y="55.4" width="9.4" height="3.6" fill="#c9d8ea" stroke="#777" stroke-width="0.5"/><path d="M625 57.2 H619 M620.6 55.6 L619 57.2 L620.6 58.8" fill="none" stroke="#3a78c0" stroke-width="0.8"/><text x="616.80" y="81.10" font-size="8.3" fill="#444" font-weight="normal" textLength="19.60" lengthAdjust="spacingAndGlyphs" style="white-space:pre" >Insert</text><path d="M625.00 88.60 L628.20 88.60 L626.60 90.20 Z" fill="#444"/><rect x="646.4" y="50" width="9" height="3.2" fill="#fff" stroke="#777" stroke-width="0.6"/><path d="M650.90 50 V53.2" stroke="#777" stroke-width="0.5"/><rect x="646.4" y="61.8" width="9" height="6.8" fill="#fff" stroke="#777" stroke-width="0.6"/><path d="M650.90 61.8 V68.6" stroke="#777" stroke-width="0.5"/><path d="M646.4 65.20 H655.4" stroke="#777" stroke-width="0.5"/><rect x="652" y="55.4" width="6" height="3.6" fill="#c9d8ea" stroke="#777" stroke-width="0.5"/><path d="M658.6 53 L666.8 61.4 M666.8 53 L658.6 61.4" stroke="#e0523a" stroke-width="1.2"/><text x="645.00" y="81.10" font-size="8.3" fill="#444" font-weight="normal" textLength="22.40" lengthAdjust="spacingAndGlyphs" style="white-space:pre" >Delete</text><path d="M654.61 88.60 L657.80 88.60 L656.20 90.20 Z" fill="#444"/><rect x="675.8" y="53.2" width="19.2" height="14.2" fill="#fff" stroke="#777" stroke-width="0.6"/><path d="M680.60 53.2 V67.4" stroke="#777" stroke-width="0.5"/><path d="M685.40 53.2 V67.4" stroke="#777" stroke-width="0.5"/><path d="M690.20 53.2 V67.4" stroke="#777" stroke-width="0.5"/><path d="M675.8 56.75 H695.0" stroke="#777" stroke-width="0.5"/><path d="M675.8 60.30 H695.0" stroke="#777" stroke-width="0.5"/><path d="M675.8 63.85 H695.0" stroke="#777" stroke-width="0.5"/><rect x="681.4" y="57.4" width="4.6" height="6.4" fill="#3a78c0"/><path d="M676.4 67.4 V69.4 H682 L683 67.4 M684 67.4 V69.4 H690.6 L691.6 67.4" fill="#fff" stroke="#777" stroke-width="0.5"/><path d="M676.6 50.2 H694 M678 49 L676.6 50.2 L678 51.4 M692.6 49 L694 50.2 L692.6 51.4 M676 48.6 V52 M694.6 48.6 V52" fill="none" stroke="#3a78c0" stroke-width="0.6"/><text x="673.00" y="81.10" font-size="8.3" fill="#444" font-weight="normal" textLength="25.20" lengthAdjust="spacingAndGlyphs" style="white-space:pre" >Format</text><path d="M684.00 88.60 L687.20 88.60 L685.60 90.20 Z" fill="#444"/><text x="647.60" y="105.50" font-size="8.3" fill="#333" font-weight="normal" textLength="17.20" lengthAdjust="spacingAndGlyphs" style="white-space:pre" >Cells</text><rect x="704.20" y="47" width="0.8" height="58.00" fill="#d9d9d9"/><path d="M719.4 50.4 H709.6 L714.8 54.6 L709.6 58.8 H719.4" fill="none" stroke="#444" stroke-width="1.1"/><text x="722.50" y="58.20" font-size="8.3" fill="#444" font-weight="normal" textLength="34.70" lengthAdjust="spacingAndGlyphs" style="white-space:pre" >AutoSum</text><path d="M764.11 53.70 L767.30 53.70 L765.70 55.30 Z" fill="#444"/><rect x="710" y="65" width="9.4" height="10" fill="#fff" stroke="#555" stroke-width="0.8"/><rect x="710" y="65" width="9.4" height="1.6" fill="#555"/><path d="M714.7 67.6 V73.2 M712.4 71 L714.7 73.4 L717 71" fill="none" stroke="#3a78c0" stroke-width="0.9"/><text x="722.50" y="74.00" font-size="8.3" fill="#444" font-weight="normal" textLength="9.90" lengthAdjust="spacingAndGlyphs" style="white-space:pre" >Fill</text><path d="M735.00 69.60 L738.20 69.60 L736.60 71.20 Z" fill="#444"/><path d="M710.4 87.6 L715.4 82.2 L718.6 85 L713.6 90.2 Z" fill="#e87a8c"/><text x="722.50" y="89.80" font-size="8.3" fill="#444" font-weight="normal" textLength="18.90" lengthAdjust="spacingAndGlyphs" style="white-space:pre" >Clear</text><path d="M743.20 85.20 L746.39 85.20 L744.80 86.80 Z" fill="#444"/><text x="774.6" y="59.4" font-size="10.4" fill="#3a78c0" font-weight="bold" textLength="8" lengthAdjust="spacingAndGlyphs">A</text><text x="775.4" y="68.8" font-size="10" fill="#9c5fc8" font-weight="bold" textLength="7.4" lengthAdjust="spacingAndGlyphs">Z</text><path d="M783.6 55.4 H795.4 L790.6 60.8 V66 L788.4 67 V60.8 Z" fill="#8a8a8a"/><text x="773.50" y="81.10" font-size="8.3" fill="#444" font-weight="normal" textLength="24.00" lengthAdjust="spacingAndGlyphs" style="white-space:pre" >Sort &amp;</text><text x="773.50" y="92.90" font-size="8.3" fill="#444" font-weight="normal" textLength="18.10" lengthAdjust="spacingAndGlyphs" style="white-space:pre" >Filter</text><path d="M794.00 88.60 L797.20 88.60 L795.60 90.20 Z" fill="#444"/><circle cx="818" cy="56.4" r="5.6" fill="none" stroke="#3a78c0" stroke-width="1.6"/><path d="M813.2 61.2 L806.2 68" stroke="#3a78c0" stroke-width="2"/><text x="803.00" y="81.10" font-size="8.3" fill="#444" font-weight="normal" textLength="24.60" lengthAdjust="spacingAndGlyphs" style="white-space:pre" >Find &amp;</text><text x="801.30" y="92.90" font-size="8.3" fill="#444" font-weight="normal" textLength="23.30" lengthAdjust="spacingAndGlyphs" style="white-space:pre" >Select</text><path d="M826.40 88.60 L829.60 88.60 L828.00 90.20 Z" fill="#444"/><text x="755.20" y="105.50" font-size="8.3" fill="#333" font-weight="normal" textLength="26.20" lengthAdjust="spacingAndGlyphs" style="white-space:pre" >Editing</text><rect x="832.90" y="47" width="0.8" height="58.00" fill="#d9d9d9"/><path d="M876.4 104.4 L879.2 101.6 L882 104.4" fill="none" stroke="#555" stroke-width="0.9"/><rect x="3.4" y="116.4" width="70.8" height="17.2" fill="#fff" stroke="#d0d0d0" stroke-width="0.7"/><text x="8.20" y="128.40" font-size="8.6" fill="#222" font-weight="normal" textLength="19.20" lengthAdjust="spacingAndGlyphs" style="white-space:pre" >AQ26</text><path d="M65.03 124.11 L69.38 124.11 L67.20 126.29 Z" fill="#555"/><circle cx="84.4" cy="121" r="0.55" fill="#999"/><circle cx="84.4" cy="124.8" r="0.55" fill="#999"/><circle cx="84.4" cy="128.6" r="0.55" fill="#999"/><rect x="95.4" y="116.4" width="76" height="17.2" fill="#fff" stroke="#d0d0d0" stroke-width="0.7"/><path d="M104.8 121.6 L111.6 128.4 M111.6 121.6 L104.8 128.4" stroke="#c2c2c2" stroke-width="0.9"/><path d="M129.6 125.2 L132.4 128.2 L137.8 121.6" fill="none" stroke="#c2c2c2" stroke-width="1.1"/><text x="154.4" y="128.2" font-family="Liberation Serif" font-style="italic" font-size="9.8" fill="#333" stroke="#333" stroke-width="0.2">f</text><text x="158.2" y="128.4" font-family="Liberation Serif" font-style="italic" font-size="7.2" fill="#333" stroke="#333" stroke-width="0.15">x</text><rect x="173.8" y="116.4" width="711.8" height="17.2" fill="#fff" stroke="#d0d0d0" stroke-width="0.7"/><path d="M877.2 123.6 L879.6 125.8 L882 123.6" fill="none" stroke="#555" stroke-width="0.9"/></g><g font-family="Liberation Sans"><rect x="874.2" y="141.1" width="14.8" height="507.3" fill="#e6e6e6"/><rect x="873.9" y="154.2" width="0.7" height="494.2" fill="#c8c8c8"/><rect x="876.8" y="142.4" width="9.8" height="506" fill="#fff" stroke="#c8c8c8" stroke-width="0.7"/><path d="M876.8 152.6 H886.6 M876.8 638.8 H886.6" stroke="#c8c8c8" stroke-width="0.7"/><path d="M879.4 149.2 L881.7 146.6 L884 149.2 Z" fill="#666"/><path d="M879.4 642.4 L881.7 645 L884 642.4 Z" fill="#666"/><rect x="0" y="648.4" width="889" height="19.7" fill="#e6e6e6"/><rect x="0" y="648.1" width="889" height="0.7" fill="#c8c8c8"/><path d="M21.4 655.4 L19.2 657.6 L21.4 659.8" fill="none" stroke="#c0c0c0" stroke-width="0.8"/><path d="M39.2 655.4 L41.4 657.6 L39.2 659.8" fill="none" stroke="#c0c0c0" stroke-width="0.8"/><rect x="69.7" y="648.1" width="45" height="17.4" fill="#fff"/><rect x="69.7" y="648.1" width="0.7" height="17.4" fill="#c8c8c8"/><rect x="114.1" y="648.1" width="0.7" height="17.4" fill="#c8c8c8"/><rect x="69.7" y="664.6" width="45" height="1.6" fill="#217346"/><text x="77.60" y="661.00" font-size="8.8" fill="#1d6b40" font-weight="bold" textLength="28.20" lengthAdjust="spacingAndGlyphs" style="white-space:pre" stroke="#1d6b40" stroke-width="0.25">Sheet1</text><circle cx="143" cy="657.6" r="5.4" fill="none" stroke="#777" stroke-width="0.8"/><path d="M143 654.6 V660.6 M140 657.6 H146" stroke="#777" stroke-width="0.9"/><circle cx="533.8" cy="654.8" r="0.5" fill="#aaa"/><circle cx="533.8" cy="657.6" r="0.5" fill="#aaa"/><circle cx="533.8" cy="660.4" r="0.5" fill="#aaa"/><rect x="545.4" y="653.4" width="330.4" height="9.9" fill="#dcdcdc"/><rect x="545.4" y="653.4" width="107" height="9.9" fill="#fff" stroke="#b8b8b8" stroke-width="0.7"/><path d="M555.2 653.4 V663.3" stroke="#b8b8b8" stroke-width="0.7"/><path d="M551.8 655.8 L548.8 658.35 L551.8 660.9 Z" fill="#555"/><rect x="865" y="654.2" width="10.8" height="9" fill="#fff" stroke="#b8b8b8" stroke-width="0.7"/><path d="M869 656.2 L872 658.7 L869 661.2 Z" fill="#555"/><rect x="0" y="668.1" width="889" height="15.1" fill="#f3f3f3"/><rect x="0" y="667.8" width="889" height="0.6" fill="#d8d8d8"/><text x="5.00" y="678.60" font-size="8.2" fill="#444" font-weight="normal" textLength="21.60" lengthAdjust="spacingAndGlyphs" style="white-space:pre" >Ready</text><rect x="690.6" y="668.4" width="25.8" height="14.8" fill="#d4d4d4"/><rect x="698.6" y="671.4" width="9.4" height="8.4" fill="none" stroke="#666" stroke-width="0.6"/><path d="M701.73 671.4 V679.8 M698.6 674.20 H708" stroke="#666" stroke-width="0.5"/><path d="M704.87 671.4 V679.8 M698.6 677.00 H708" stroke="#666" stroke-width="0.5"/><rect x="724.8" y="671.2" width="9.8" height="8.8" fill="none" stroke="#777" stroke-width="0.6"/><rect x="727" y="672.8" width="5.4" height="5.6" fill="none" stroke="#777" stroke-width="0.5"/><rect x="751" y="671.2" width="10" height="8.8" fill="none" stroke="#777" stroke-width="0.6"/><path d="M754.4 671.2 V675.4 H757.6 V671.2" fill="none" stroke="#777" stroke-width="0.6"/><rect x="772.8" y="675" width="4" height="0.9" fill="#555"/><rect x="779.5" y="675.1" width="69.5" height="0.6" fill="#bbb"/><rect x="812.8" y="671.4" width="4.4" height="7.4" fill="#666"/><path d="M851.6 675.4 H856.8 M854.2 672.8 V678" stroke="#555" stroke-width="0.9"/><text x="865.00" y="678.40" font-size="8" fill="#444" font-weight="normal" textLength="18.20" lengthAdjust="spacingAndGlyphs" style="white-space:pre" >100%</text><rect x="0" y="683.2" width="889" height="27.8" fill="#070b13"/><g fill="#fff"><path d="M10.8 692.6 L15.9 691.9 V696.8 H10.8 Z"/><path d="M16.6 691.8 L22.4 691 V696.8 H16.6 Z"/><path d="M10.8 697.5 H15.9 V702.4 L10.8 701.7 Z"/><path d="M16.6 697.5 H22.4 V703.3 L16.6 702.5 Z"/></g><rect x="33" y="683.2" width="239" height="27.8" fill="#f2f2f2"/><rect x="33" y="683.2" width="239" height="0.8" fill="#c8c8c8"/><circle cx="47.2" cy="697.3" r="5.9" fill="none" stroke="#111" stroke-width="1.4"/><text x="61.60" y="700.60" font-size="9.6" fill="#333" font-weight="normal" textLength="88.20" lengthAdjust="spacingAndGlyphs" style="white-space:pre" >Type here to search</text><rect x="255.4" y="691.6" width="4" height="7" rx="2" fill="none" stroke="#555" stroke-width="0.8"/><path d="M254 697 Q254 701 257.4 701 Q260.8 701 260.8 697 M257.4 701 V703.4 M255.4 703.4 H259.4" fill="none" stroke="#555" stroke-width="0.8"/><path d="M283 691.4 H292 M283 702 H292" stroke="#ddd" stroke-width="0.9"/><rect x="285" y="693.6" width="5" height="6.2" fill="none" stroke="#ddd" stroke-width="0.9"/><path d="M294.6 692.2 V701.4" stroke="#ddd" stroke-width="0.9"/><circle cx="294.6" cy="696.6" r="0.9" fill="#ddd"/><path d="M331.4 698.6 H321 Q321.6 702 325.6 702.2 Q328.6 702.3 331 701 V703.8 Q328.4 705 325 704.8 Q317.6 704 317.4 697.6 Q317.6 690.4 324.4 690.2 Q331.6 690.4 331.4 697.6 Z M321.2 696 H327.6 Q327.2 692.8 324.4 692.8 Q321.6 693 321.2 696 Z" fill="#1f8be0" fill-rule="evenodd"/><path d="M350.6 692 H356 L357.4 693.6 H365.8 V703.6 H350.6 Z" fill="#f3c85a"/><rect x="350.6" y="695" width="15.2" height="8.6" fill="#fbd774"/><path d="M354.6 703.6 V699.6 H361.8 V703.6" fill="none" stroke="#2b8fd6" stroke-width="1.6"/><rect x="344.2" y="709.2" width="27.8" height="1.8" fill="#7ab4e6"/><circle cx="392.3" cy="697.4" r="8.2" fill="#5fb046"/><circle cx="391.4" cy="698.6" r="3.4" fill="none" stroke="#fff" stroke-width="1.6"/><path d="M395 690.4 L396.2 693.8 M398.8 692.4 L396.8 695 M400.4 695.8 L397.6 696.6" stroke="#f36c21" stroke-width="1.2"/><path d="M418.4 693.6 L430.6 690.8 L434.6 700.6 L422.6 703.8 Z" fill="#7db94a"/><path d="M419.6 694.8 L431 692.4 L434.4 701.2 L423 704 Z" fill="#5aa5e2"/><path d="M420.6 698.6 L432.6 696 L434.2 700.6 L422.6 703.2 Z" fill="#e8f1fb"/><path d="M418.4 703.8 Q426 706 434.6 702.4" fill="none" stroke="#f2b534" stroke-width="1.2"/><rect x="451.8" y="688.8" width="17.2" height="16.5" fill="#f1dcd8"/><path d="M453.6 704 L459.2 690.6 H462.6 L467.6 704 H463.8 L462.6 700.4 H458.4 L457.2 704 Z M459.4 697.6 H461.6 L460.5 694.2 Z" fill="#c4212b" fill-rule="evenodd"/><rect x="446.8" y="709.2" width="27.7" height="1.8" fill="#7ab4e6"/><circle cx="494.6" cy="697.3" r="7.9" fill="#db4437"/><path d="M494.6 697.3 L501.4 693.4 A7.9 7.9 0 0 1 498.6 704.1 Z" fill="#f4c20d"/><path d="M494.6 697.3 L498.6 704.1 A7.9 7.9 0 0 1 487.8 693.4 Z" fill="#0f9d58"/><circle cx="494.6" cy="697.3" r="3.6" fill="#fff"/><circle cx="494.6" cy="697.3" r="2.7" fill="#4285f4"/><rect x="480.9" y="709.2" width="27.3" height="1.8" fill="#7ab4e6"/><rect x="512" y="683.2" width="33" height="27.8" fill="#2c3036"/><rect x="525" y="689.6" width="11.2" height="15.4" fill="#fff" stroke="#1e7145" stroke-width="0.6"/><path d="M528.6 689.6 V705 M525 693.4 H536.2 M525 697.2 H536.2 M525 701 H536.2" stroke="#1e7145" stroke-width="0.6"/><path d="M520.5 690.6 L530 689 V705.6 L520.5 704 Z" fill="#1e7145"/><text x="522.2" y="700.8" font-size="7.4" font-weight="bold" fill="#fff">x</text><rect x="512" y="709.2" width="33" height="1.8" fill="#7ab4e6"/><circle cx="701.6" cy="693.8" r="2" fill="none" stroke="#ddd" stroke-width="0.8"/><circle cx="697.2" cy="696.6" r="1.8" fill="none" stroke="#ddd" stroke-width="0.8"/><path d="M694.2 702.4 Q694.6 698.8 697.2 698.6 Q699.8 698.8 700 702.4 M699.4 698.2 Q700 696.2 701.6 696 Q704.4 696.2 704.6 700" fill="none" stroke="#ddd" stroke-width="0.8"/><path d="M720.4 699.2 L724.5 695 L728.6 699.2" fill="none" stroke="#eee" stroke-width="1"/><rect x="735.2" y="692.2" width="11.1" height="10.1" fill="#f2f2f2"/><rect x="735.8" y="692.8" width="9.9" height="8.9" fill="#d9232e"/><text x="737.4" y="700.6" font-size="8" font-weight="bold" font-style="italic" fill="#fff">V</text><rect x="754.6" y="692.4" width="8.6" height="6.4" fill="none" stroke="#ddd" stroke-width="0.8"/><path d="M758.9 698.8 V701.6 M756.2 701.8 H761.6 M752 694.6 V702.4" stroke="#ddd" stroke-width="0.8"/><path d="M769.2 695 H771.2 L774.4 692.4 V702.4 L771.2 699.8 H769.2 Z" fill="none" stroke="#ddd" stroke-width="0.8"/><path d="M776 695 Q777.2 697.4 776 699.8 M777.8 693.6 Q779.8 697.4 777.8 701.2" fill="none" stroke="#ddd" stroke-width="0.8"/><text x="787.00" y="700.20" font-size="8.2" fill="#fff" font-weight="normal" textLength="15.80" lengthAdjust="spacingAndGlyphs" style="white-space:pre" >ENG</text><text x="814.40" y="693.80" font-size="8.2" fill="#fff" font-weight="normal" textLength="30.20" lengthAdjust="spacingAndGlyphs" style="white-space:pre" >8:28 AM</text><text x="812.00" y="706.20" font-size="8.2" fill="#fff" font-weight="normal" textLength="36.20" lengthAdjust="spacingAndGlyphs" style="white-space:pre" >10/3/2018</text><path d="M860.6 692.4 H875.4 V702 H868 L865 705 V702 H860.6 Z" fill="#eee"/><path d="M863 695 H873 M863 697.4 H873 M863 699.6 H870" stroke="#888" stroke-width="0.6"/><circle cx="871.4" cy="702.8" r="4.2" fill="#070b13" stroke="#eee" stroke-width="0.8"/><text x="869.6" y="705.6" font-size="6.4" fill="#fff">1</text></g>
</svg>
</body></html>
